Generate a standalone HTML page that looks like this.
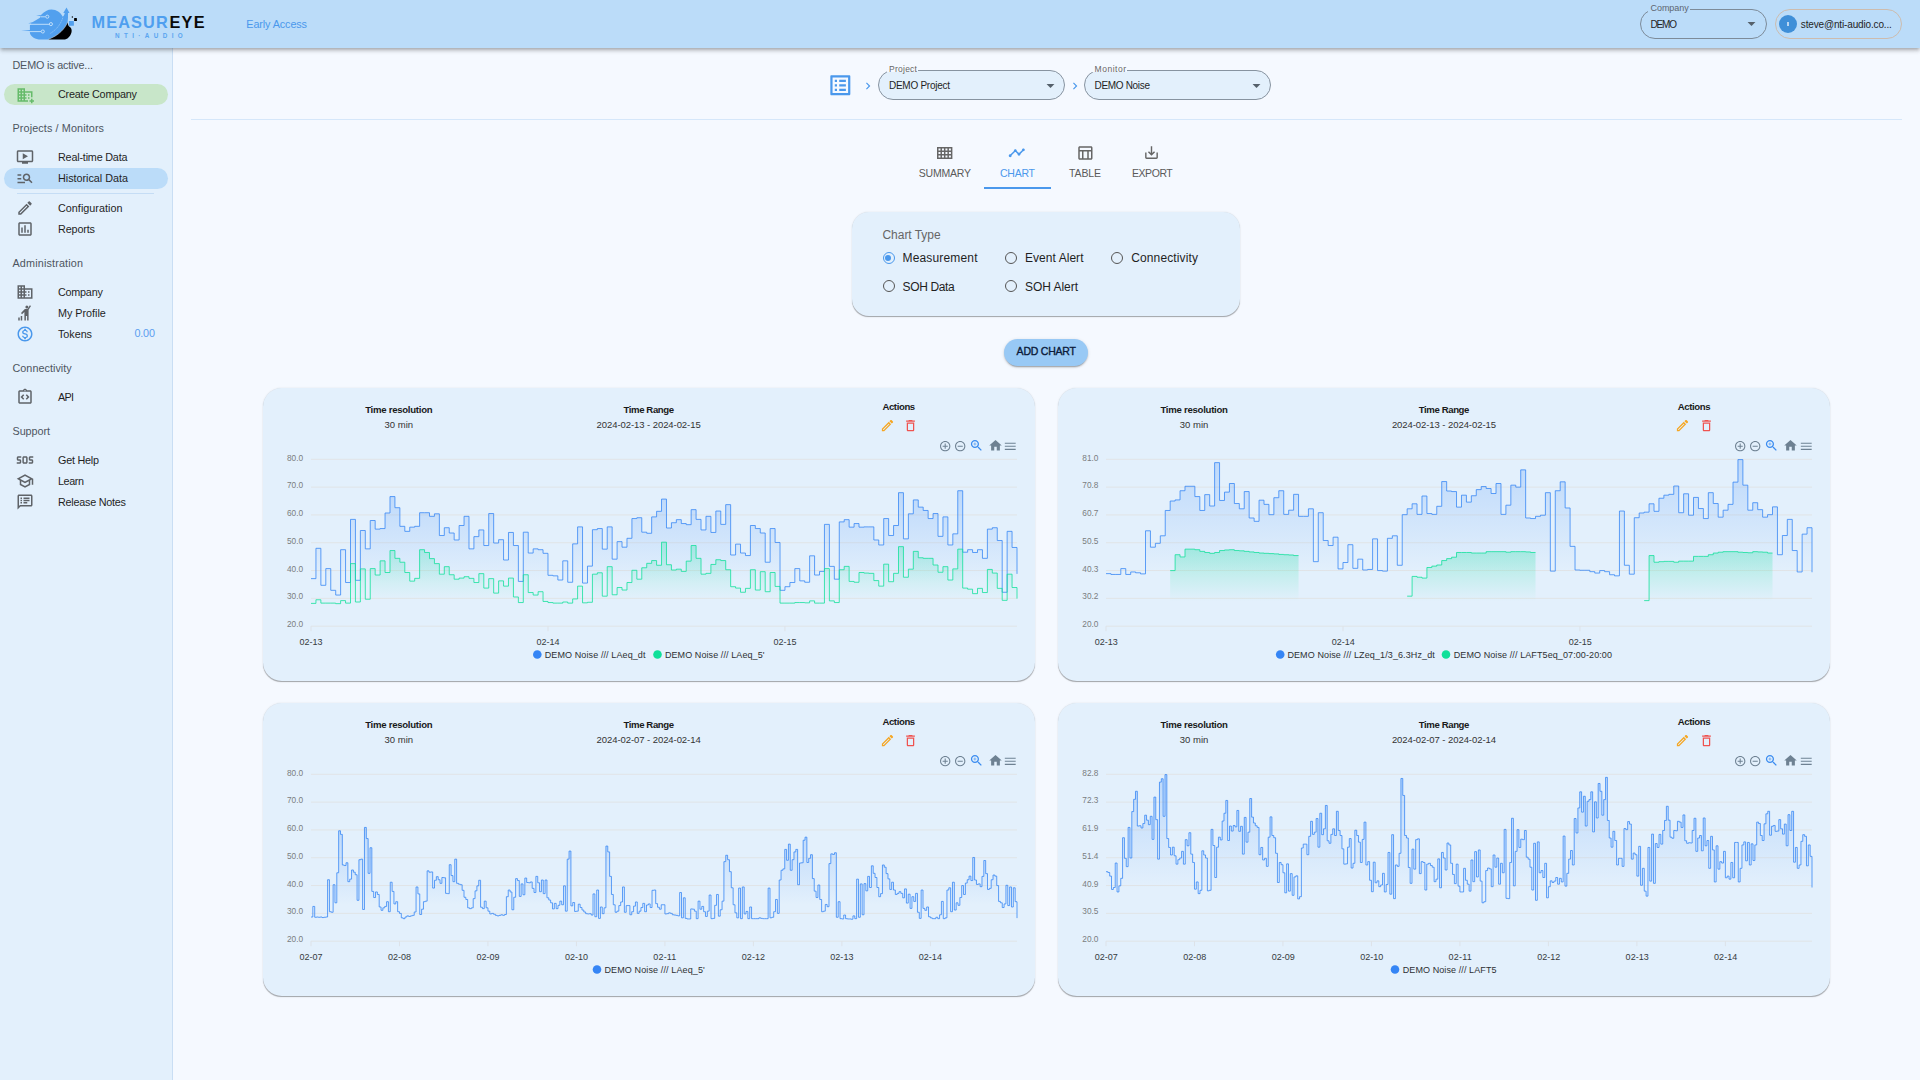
<!DOCTYPE html><html lang="en"><head><meta charset="utf-8"><title>MeasurEye - Historical Data</title>
<style>
html,body{margin:0;padding:0;}
body{width:1920px;height:1080px;overflow:hidden;background:#f5f9ff;font-family:"Liberation Sans", Arial, sans-serif;position:relative;}
*{box-sizing:border-box;}
#hdr{position:absolute;left:0;top:0;width:1920px;height:48px;background:#bbdcf9;box-shadow:0 1.500px 3px -0.750px rgba(0,0,0,.2),0 3px 3.750px 0 rgba(0,0,0,.14),0 0.750px 7.500px 0 rgba(0,0,0,.12);z-index:5;}
#side{position:absolute;left:0;top:48px;width:173px;height:1032px;background:#e3f0fc;border-right:1px solid #c9def4;z-index:2;}
#main{position:absolute;left:0;top:0;width:1920px;height:1080px;z-index:1;}
article.chart,section.grp,div.grp{position:absolute;left:0;top:0;width:0;height:0;}
.pill{position:absolute;left:4px;width:164px;height:21px;border-radius:11px;}
.sel{position:absolute;height:30px;border-radius:15px;border:1px solid #8793a0;}
.card{position:absolute;background:#e3f0fc;border-radius:18.750px;box-shadow:0 1.500px 0.750px -0.750px rgba(0,0,0,.2),0 0.750px 0.750px 0 rgba(0,0,0,.11),0 0.750px 2.250px 0 rgba(0,0,0,.08);}
.radio{position:absolute;width:12px;height:12px;border-radius:50%;border:1.4px solid #555;}
.radio.on{border-color:#4a98ec;}
.radio.on::after{content:"";position:absolute;left:1.6px;top:1.6px;width:6px;height:6px;border-radius:50%;background:#4a98ec;}

</style></head><body>
<header id="hdr">
<svg style="position:absolute;left:16px;top:2px" width="66" height="44" viewBox="16 2 66 44">
<path d="M41 15.100 C44 11.600 48 9.600 51.500 9.600 C56.500 9.600 60.600 12.600 62.800 16.800 C63.800 15.800 64.500 14.500 64.800 12.900 L63.300 12.900 L66.500 7.600 L69.500 12.900 L68 12.900 C68.100 16 68 19.500 67.600 22.100 C65 28.500 59 35.500 48 39.500 L38.700 39.400 C33.500 38.600 30 35.600 29.900 32.500 L29.900 25.200 L32 22.500 L40 17.800 L40.200 15.600 Z" fill="#52a0ee"/>
<path d="M40.500 15.050 L36 15.500 L40.500 16 Z M32.500 22.300 L28.200 23.200 L32.500 23.800 Z M30.200 29.900 L21 30.600 L30.200 31.100 Z" fill="#52a0ee"/>
<path d="M48 39.500 C59 35.500 65.200 28.500 67.600 22.100 C67.800 24 68.200 25.500 68.900 26.300 C71 27.500 72 29.500 71.600 31.800 C71 35.200 68.600 38.700 65 39.500 Z" fill="#000"/>
<path d="M48 39.500 C59 35.500 65.200 28.500 67.600 22.100" stroke="#cfe6fb" stroke-width="0.450" fill="none"/>
<path d="M62.800 17.700 C60.800 24 56.500 29.800 49.800 33.700" stroke="#bbdcf9" stroke-width="0.450" stroke-dasharray="1.600 0.500" fill="none"/>
<g stroke="#c4e0fa" stroke-width="0.950" fill="none"><path d="M40.300 16.800H45.500"/><circle cx="47.300" cy="16.700" r="1.550"/><path d="M29.800 24.300H49.100"/><circle cx="50.900" cy="24.100" r="1.550"/><path d="M29.800 31.600H41"/><circle cx="42.800" cy="31.500" r="1.550"/></g>
<rect x="68.900" y="21" width="5" height="4.700" rx="0.500" fill="#52a0ee"/><rect x="74.100" y="18.100" width="2.800" height="2.900" rx="0.300" fill="#000"/><circle cx="72.400" cy="17.100" r="0.750" fill="#111"/><circle cx="75.200" cy="16.200" r="0.350" fill="#8ec3f5"/>
</svg>
<span style="position:absolute;left:91.60px;top:13px;font-size:16.3px;line-height:18px;height:18px;color:#4f9fef;font-weight:700;white-space:nowrap;letter-spacing:1.107px;margin-right:-1.107px;">MEASUR</span>
<span style="position:absolute;left:169.40px;top:13px;font-size:16.3px;line-height:18px;height:18px;color:#0a0a0a;font-weight:700;white-space:nowrap;letter-spacing:1.303px;margin-right:-1.303px;">EYE</span>
<span style="position:absolute;left:115.00px;top:32px;font-size:6.3px;line-height:7px;height:7px;color:#5aa5f0;font-weight:700;white-space:nowrap;letter-spacing:4.396px;margin-right:-4.396px;">NTI·AUDIO</span>
<span style="position:absolute;left:246.30px;top:18px;font-size:10.8px;line-height:12px;height:12px;color:#4a98ec;font-weight:400;white-space:nowrap;letter-spacing:-0.101px;margin-right:0.101px;">Early Access</span>
<div class="sel" style="left:1640px;top:9px;width:127px;border-color:#7d8b99"></div>
<div style="position:absolute;left:1648px;top:6px;width:41.500px;height:6px;background:#bbdcf9"></div>
<span style="position:absolute;left:1650.50px;top:3px;font-size:9px;line-height:10px;height:10px;color:#5d6670;font-weight:400;white-space:nowrap;letter-spacing:-0.055px;margin-right:0.055px;">Company</span>
<span style="position:absolute;left:1650.50px;top:19px;font-size:10px;line-height:11px;height:11px;color:#1f1f1f;font-weight:400;white-space:nowrap;letter-spacing:-1.167px;margin-right:1.167px;">DEMO</span>
<svg style="position:absolute;left:1741.50px;top:14.10px" width="19" height="19" viewBox="0 0 24 24" fill="#55606b" ><path d="M7 10l5 5 5-5z"/></svg>
<div class="sel" style="left:1775px;top:9px;width:127px;border-color:#cdbcae"></div>
<div style="position:absolute;left:1779px;top:14.800px;width:18px;height:18px;border-radius:50%;background:#3f8fd8"></div>
<div style="position:absolute;left:1787.400px;top:22px;width:1.200px;height:3.600px;background:#b9d6f2"></div>
<span style="position:absolute;left:1800.80px;top:19px;font-size:10px;line-height:11px;height:11px;color:#1f1f1f;font-weight:400;white-space:nowrap;letter-spacing:-0.150px;margin-right:0.150px;">steve@nti-audio.co...</span>
</header>
<aside id="side"></aside>
<nav style="position:absolute;left:0;top:0;z-index:3">
<span style="position:absolute;left:12.50px;top:59px;font-size:10.8px;line-height:12px;height:12px;color:#4d5560;font-weight:400;white-space:nowrap;letter-spacing:-0.182px;margin-right:0.182px;">DEMO is active...</span>
<div class="pill" style="top:84px;background:#c8e6c9"></div>
<svg style="position:absolute;left:15.60px;top:85.90px" width="18" height="18" viewBox="0 0 24 24" fill="#66bb6a" ><path d="M12 7V3H2v18h14v-2h-4v-2h2v-2h-2v-2h2v-2h-2V9h8v6h2V7H12zM6 19H4v-2h2v2zm0-4H4v-2h2v2zm0-4H4V9h2v2zm0-4H4V5h2v2zm4 12H8v-2h2v2zm0-4H8v-2h2v2zm0-4H8V9h2v2zm0-4H8V5h2v2zm14 12v2h-2v2h-2v-2h-2v-2h2v-2h2v2h2zm-6-8h-2v2h2v-2zm0 4h-2v2h2v-2z"/></svg>
<span style="position:absolute;left:58.00px;top:88px;font-size:10.8px;line-height:12px;height:12px;color:#1f1f1f;font-weight:400;white-space:nowrap;letter-spacing:-0.202px;margin-right:0.202px;">Create Company</span>
<span style="position:absolute;left:12.50px;top:122px;font-size:10.8px;line-height:12px;height:12px;color:#4d5560;font-weight:400;white-space:nowrap;letter-spacing:0.116px;margin-right:-0.116px;">Projects / Monitors</span>
<svg style="position:absolute;left:16.00px;top:148.00px" width="18" height="18" viewBox="0 0 24 24" fill="#5f6368" ><path d="M21 3H3c-1.110 0-2 .890-2 2v12c0 1.100.890 2 2 2h5v2h8v-2h5c1.100 0 1.990-.900 1.990-2L23 5c0-1.110-.900-2-2-2zm0 14H3V5h18v12zm-5-6l-7 4V7z"/></svg>
<span style="position:absolute;left:58.00px;top:151px;font-size:10.8px;line-height:12px;height:12px;color:#1f1f1f;font-weight:400;white-space:nowrap;letter-spacing:-0.194px;margin-right:0.194px;">Real-time Data</span>
<div class="pill" style="top:168px;background:#bbdcf9"></div>
<svg style="position:absolute;left:16.00px;top:169.00px" width="18" height="18" viewBox="0 0 24 24" fill="#5f6368" ><path d="M7 9H2V7h5v2zm0 3H2v2h5v-2zm13.590 7l-3.830-3.830c-.800.520-1.740.830-2.760.830-2.760 0-5-2.240-5-5s2.240-5 5-5 5 2.240 5 5c0 1.020-.310 1.960-.830 2.750L22 17.590 20.590 19zM17 11c0-1.650-1.350-3-3-3s-3 1.350-3 3 1.350 3 3 3 3-1.350 3-3zM2 19h10v-2H2v2z"/></svg>
<span style="position:absolute;left:58.00px;top:172px;font-size:10.8px;line-height:12px;height:12px;color:#1f1f1f;font-weight:400;white-space:nowrap;letter-spacing:-0.015px;margin-right:0.015px;">Historical Data</span>
<div style="position:absolute;left:17px;top:193px;width:137px;height:1px;background:#c5ddf5"></div>
<svg style="position:absolute;left:16.00px;top:199.00px" width="18" height="18" viewBox="0 0 24 24" fill="#5f6368" ><path d="M14.06 9.02l.92.92L5.92 19H5v-.92l9.06-9.06M17.66 3c-.25 0-.51.1-.7.29l-1.83 1.83 3.75 3.75 1.83-1.83c.39-.39.39-1.02 0-1.41l-2.34-2.34c-.2-.2-.45-.29-.71-.29zm-3.6 3.19L3 17.25V21h3.75L17.81 9.94l-3.75-3.75z"/></svg>
<span style="position:absolute;left:58.00px;top:202px;font-size:10.8px;line-height:12px;height:12px;color:#1f1f1f;font-weight:400;white-space:nowrap;letter-spacing:0.022px;margin-right:-0.022px;">Configuration</span>
<svg style="position:absolute;left:16.00px;top:220.00px" width="18" height="18" viewBox="0 0 24 24" fill="#5f6368" ><path d="M19 3H5c-1.100 0-2 .900-2 2v14c0 1.100.900 2 2 2h14c1.100 0 2-.900 2-2V5c0-1.100-.900-2-2-2zm0 16H5V5h14v14zM7 10h2v7H7zm4-3h2v10h-2zm4 6h2v4h-2z"/></svg>
<span style="position:absolute;left:58.00px;top:223px;font-size:10.8px;line-height:12px;height:12px;color:#1f1f1f;font-weight:400;white-space:nowrap;letter-spacing:-0.135px;margin-right:0.135px;">Reports</span>
<span style="position:absolute;left:12.50px;top:257px;font-size:10.8px;line-height:12px;height:12px;color:#4d5560;font-weight:400;white-space:nowrap;letter-spacing:0.160px;margin-right:-0.160px;">Administration</span>
<svg style="position:absolute;left:16.00px;top:283.00px" width="18" height="18" viewBox="0 0 24 24" fill="#5f6368" ><path d="M12 7V3H2v18h20V7H12zM6 19H4v-2h2v2zm0-4H4v-2h2v2zm0-4H4V9h2v2zm0-4H4V5h2v2zm4 12H8v-2h2v2zm0-4H8v-2h2v2zm0-4H8V9h2v2zm0-4H8V5h2v2zm10 12h-8v-2h2v-2h-2v-2h2v-2h-2V9h8v10zm-2-8h-2v2h2v-2zm0 4h-2v2h2v-2z"/></svg>
<span style="position:absolute;left:58.00px;top:286px;font-size:10.8px;line-height:12px;height:12px;color:#1f1f1f;font-weight:400;white-space:nowrap;letter-spacing:-0.236px;margin-right:0.236px;">Company</span>
<svg style="position:absolute;left:16.00px;top:304.00px" width="18" height="18" viewBox="0 0 24 24" fill="#5f6368" ><circle cx="14.500" cy="4" r="2"/><path d="M18.500 1.500l1.500 1-3.200 5.300V22h-2v-6h-1.600v6h-2V10.800L8 13.500l-1.300-1.500 4.400-4.600c.500-.500 1.100-.700 1.800-.700h2.400zM3 22v-4h2v4zm3.300 0v-6h2v6z"/></svg>
<span style="position:absolute;left:58.00px;top:307px;font-size:10.8px;line-height:12px;height:12px;color:#1f1f1f;font-weight:400;white-space:nowrap;letter-spacing:-0.022px;margin-right:0.022px;">My Profile</span>
<svg style="position:absolute;left:16.00px;top:325.00px" width="18" height="18" viewBox="0 0 24 24" fill="#4a98ec" ><path d="M12 2C6.480 2 2 6.480 2 12s4.480 10 10 10 10-4.480 10-10S17.520 2 12 2zm0 18c-4.410 0-8-3.590-8-8s3.590-8 8-8 8 3.590 8 8-3.590 8-8 8zm.310-8.860c-1.770-.450-2.340-.940-2.340-1.670 0-.840.790-1.430 2.100-1.430 1.380 0 1.900.660 1.940 1.640h1.710c-.050-1.340-.870-2.570-2.490-2.970V5H10.900v1.690c-1.510.320-2.720 1.300-2.720 2.810 0 1.790 1.490 2.690 3.660 3.210 1.950.460 2.340 1.150 2.340 1.870 0 .530-.390 1.390-2.100 1.390-1.600 0-2.230-.720-2.320-1.640H8.040c.100 1.700 1.360 2.660 2.860 2.970V19h2.340v-1.670c1.520-.290 2.720-1.160 2.730-2.770-.010-2.200-1.900-2.960-3.660-3.420z"/></svg>
<span style="position:absolute;left:58.00px;top:328px;font-size:10.8px;line-height:12px;height:12px;color:#1f1f1f;font-weight:400;white-space:nowrap;letter-spacing:-0.044px;margin-right:0.044px;">Tokens</span>
<span style="position:absolute;left:134.40px;top:327px;font-size:10.8px;line-height:12px;height:12px;color:#5b9df0;font-weight:400;white-space:nowrap;letter-spacing:-0.139px;margin-right:0.139px;">0.00</span>
<span style="position:absolute;left:12.50px;top:362px;font-size:10.8px;line-height:12px;height:12px;color:#4d5560;font-weight:400;white-space:nowrap;letter-spacing:0.035px;margin-right:-0.035px;">Connectivity</span>
<svg style="position:absolute;left:16.00px;top:388.00px" width="18" height="18" viewBox="0 0 24 24" fill="#5f6368" ><path d="M11 14.170L8.830 12 11 9.830 9.590 8.410 6 12l3.590 3.590zM14.410 15.590L18 12l-3.590-3.590L13 9.830 15.170 12 13 14.170z"/><path d="M19 3h-4.180C14.400 1.840 13.300 1 12 1s-2.400.840-2.820 2H5c-.140 0-.270.010-.400.040-.390.080-.740.280-1.010.550-.180.180-.330.400-.430.640-.100.230-.160.490-.160.770v14c0 .270.060.540.160.780s.250.450.430.640c.270.270.620.470 1.010.550.130.020.260.030.400.030h14c1.100 0 2-.900 2-2V5c0-1.100-.900-2-2-2zm-7-.250c.410 0 .750.340.750.750s-.340.750-.750.750-.750-.340-.750-.750.340-.750.750-.750zM19 19H5V5h14v14z"/></svg>
<span style="position:absolute;left:58.00px;top:391px;font-size:10.8px;line-height:12px;height:12px;color:#1f1f1f;font-weight:400;white-space:nowrap;letter-spacing:-0.703px;margin-right:0.703px;">API</span>
<span style="position:absolute;left:12.50px;top:425px;font-size:10.8px;line-height:12px;height:12px;color:#4d5560;font-weight:400;white-space:nowrap;letter-spacing:-0.055px;margin-right:0.055px;">Support</span>
<svg style="position:absolute;left:16.00px;top:451.00px" width="18" height="18" viewBox="0 0 24 24" fill="#5f6368" ><path d="M13.500 7h-3c-1.100 0-2 .900-2 2v6c0 1.100.900 2 2 2h3c1.100 0 2-.900 2-2V9c0-1.100-.900-2-2-2zm0 8h-3V9h3v6zM1 15h4v-2H3c-1.100 0-2-.900-2-2V9c0-1.100.900-2 2-2h4v2H3v2h2c1.100 0 2 .900 2 2v2c0 1.100-.900 2-2 2H1v-2zm16 0h4v-2h-2c-1.100 0-2-.900-2-2V9c0-1.100.900-2 2-2h4v2h-4v2h2c1.100 0 2 .900 2 2v2c0 1.100-.900 2-2 2h-4v-2z"/></svg>
<span style="position:absolute;left:58.00px;top:454px;font-size:10.8px;line-height:12px;height:12px;color:#1f1f1f;font-weight:400;white-space:nowrap;letter-spacing:-0.230px;margin-right:0.230px;">Get Help</span>
<svg style="position:absolute;left:16.00px;top:472.00px" width="18" height="18" viewBox="0 0 24 24" fill="#5f6368" ><path d="M12 3L1 9l4 2.180v6L12 21l7-3.820v-6l2-1.090V17h2V9L12 3zm6.820 6L12 12.720 5.180 9 12 5.280 18.820 9zM17 15.990l-5 2.730-5-2.730v-3.720L12 15l5-2.730v3.720z"/></svg>
<span style="position:absolute;left:58.00px;top:475px;font-size:10.8px;line-height:12px;height:12px;color:#1f1f1f;font-weight:400;white-space:nowrap;letter-spacing:-0.406px;margin-right:0.406px;">Learn</span>
<svg style="position:absolute;left:16.00px;top:493.00px" width="18" height="18" viewBox="0 0 24 24" fill="#5f6368" ><path d="M20 4v12H5.170L4 17.170V4h16m0-2H4c-1.100 0-1.990.900-1.990 2L2 22l4-4h14c1.100 0 2-.900 2-2V4c0-1.100-.900-2-2-2zM6 12h2v2H6zm0-3h2v2H6zm0-3h2v2H6zm4 6h5v2h-5zm0-3h8v2h-8zm0-3h8v2h-8z"/></svg>
<span style="position:absolute;left:58.00px;top:496px;font-size:10.8px;line-height:12px;height:12px;color:#1f1f1f;font-weight:400;white-space:nowrap;letter-spacing:-0.236px;margin-right:0.236px;">Release Notes</span>
</nav>
<main id="main">
<div class="grp">
<svg style="position:absolute;left:826.67px;top:71.67px" width="26.67" height="26.67" viewBox="0 0 24 24" fill="#4a98ec" ><path d="M19 5v14H5V5h14m1.100-2H3.900c-.500 0-.900.400-.900.900v16.200c0 .400.400.900.900.900h16.200c.400 0 .900-.500.900-.900V3.900c0-.500-.500-.900-.900-.900zM11 7h6v2h-6V7zm0 4h6v2h-6v-2zm0 4h6v2h-6zM7 7h2v2H7zm0 4h2v2H7zm0 4h2v2H7z"/></svg>
<svg style="position:absolute;left:861.00px;top:78.50px" width="14" height="14" viewBox="0 0 24 24" fill="#4a98ec" ><path d="M10 6L8.590 7.410 13.170 12l-4.580 4.590L10 18l6-6z"/></svg>
<div class="sel" style="left:878px;top:70px;width:187px;background:#e3f0fc"></div>
<div style="position:absolute;left:886.500px;top:68px;width:31.500px;height:4px;background:#f5f9ff"></div>
<span style="position:absolute;left:889.00px;top:64px;font-size:8.5px;line-height:10px;height:10px;color:#666;font-weight:400;white-space:nowrap;letter-spacing:0.255px;margin-right:-0.255px;">Project</span>
<span style="position:absolute;left:889.00px;top:80px;font-size:10px;line-height:11px;height:11px;color:#1f1f1f;font-weight:400;white-space:nowrap;letter-spacing:-0.264px;margin-right:0.264px;">DEMO Project</span>
<svg style="position:absolute;left:1040.50px;top:75.60px" width="19" height="19" viewBox="0 0 24 24" fill="#55606b" ><path d="M7 10l5 5 5-5z"/></svg>
<svg style="position:absolute;left:1067.50px;top:78.50px" width="14" height="14" viewBox="0 0 24 24" fill="#4a98ec" ><path d="M10 6L8.590 7.410 13.170 12l-4.580 4.590L10 18l6-6z"/></svg>
<div class="sel" style="left:1084px;top:70px;width:187px;background:#e3f0fc"></div>
<div style="position:absolute;left:1092px;top:68px;width:35px;height:4px;background:#f5f9ff"></div>
<span style="position:absolute;left:1094.60px;top:64px;font-size:8.5px;line-height:10px;height:10px;color:#666;font-weight:400;white-space:nowrap;letter-spacing:0.509px;margin-right:-0.509px;">Monitor</span>
<span style="position:absolute;left:1094.60px;top:80px;font-size:10px;line-height:11px;height:11px;color:#1f1f1f;font-weight:400;white-space:nowrap;letter-spacing:-0.329px;margin-right:0.329px;">DEMO Noise</span>
<svg style="position:absolute;left:1246.50px;top:75.60px" width="19" height="19" viewBox="0 0 24 24" fill="#55606b" ><path d="M7 10l5 5 5-5z"/></svg>
<div style="position:absolute;left:191px;top:119px;width:1711px;height:1px;background:#d5e7fa"></div>
</div>
<div class="grp">
<svg style="position:absolute;left:937.400px;top:147px" width="15.400" height="12" viewBox="0 0 15.400 12"><rect x="0" y="0" width="15.400" height="12" fill="#666"/><rect x="1.500" y="1.500" width="1.975" height="2" fill="#f5f9ff"/><rect x="4.975" y="1.500" width="1.975" height="2" fill="#f5f9ff"/><rect x="8.450" y="1.500" width="1.975" height="2" fill="#f5f9ff"/><rect x="11.925" y="1.500" width="1.975" height="2" fill="#f5f9ff"/><rect x="1.500" y="5.000" width="1.975" height="2" fill="#f5f9ff"/><rect x="4.975" y="5.000" width="1.975" height="2" fill="#f5f9ff"/><rect x="8.450" y="5.000" width="1.975" height="2" fill="#f5f9ff"/><rect x="11.925" y="5.000" width="1.975" height="2" fill="#f5f9ff"/><rect x="1.500" y="8.500" width="1.975" height="2" fill="#f5f9ff"/><rect x="4.975" y="8.500" width="1.975" height="2" fill="#f5f9ff"/><rect x="8.450" y="8.500" width="1.975" height="2" fill="#f5f9ff"/><rect x="11.925" y="8.500" width="1.975" height="2" fill="#f5f9ff"/></svg>
<span style="position:absolute;left:918.75px;top:167px;font-size:10.5px;line-height:12px;height:12px;color:#5a5a5a;font-weight:400;white-space:nowrap;letter-spacing:-0.206px;margin-right:0.206px;">SUMMARY</span>
<svg style="position:absolute;left:1008.00px;top:144.00px" width="17.6" height="17.6" viewBox="0 0 24 24" fill="#4a98ec" ><path d="M23 8c0 1.100-.900 2-2 2-.180 0-.350-.020-.510-.070l-3.560 3.550c.050.160.070.340.070.520 0 1.100-.900 2-2 2s-2-.900-2-2c0-.180.020-.360.070-.520l-2.550-2.550c-.160.050-.340.070-.520.070s-.360-.020-.520-.070l-4.550 4.560c.050.160.070.330.070.510 0 1.100-.900 2-2 2s-2-.900-2-2 .900-2 2-2c.180 0 .350.020.510.070l4.560-4.550C8.020 9.360 8 9.180 8 9c0-1.100.900-2 2-2s2 .900 2 2c0 .180-.020.360-.070.520l2.550 2.550c.160-.050.340-.070.520-.070s.360.020.520.070l3.550-3.560C19.020 8.350 19 8.180 19 8c0-1.100.900-2 2-2s2 .900 2 2z"/></svg>
<span style="position:absolute;left:1000.00px;top:167px;font-size:10.5px;line-height:12px;height:12px;color:#4a98ec;font-weight:400;white-space:nowrap;letter-spacing:-0.246px;margin-right:0.246px;">CHART</span>
<svg style="position:absolute;left:1076.00px;top:144.00px" width="18" height="18" viewBox="0 0 24 24" fill="#666" ><path d="M20 3H5c-1.100 0-2 .900-2 2v14c0 1.100.900 2 2 2h15c1.100 0 2-.900 2-2V5c0-1.100-.900-2-2-2zm0 2v3H5V5h15zm-5 14h-5v-9h5v9zM5 10h3v9H5v-9zm12 9v-9h3v9h-3z"/></svg>
<span style="position:absolute;left:1069.00px;top:167px;font-size:10.5px;line-height:12px;height:12px;color:#5a5a5a;font-weight:400;white-space:nowrap;letter-spacing:-0.121px;margin-right:0.121px;">TABLE</span>
<svg style="position:absolute;left:1143.40px;top:144.30px" width="17" height="17" viewBox="0 0 24 24" fill="#666" ><path d="M19 12v7H5v-7H3v7c0 1.100.900 2 2 2h14c1.100 0 2-.900 2-2v-7h-2zm-6 .670l2.590-2.580L17 11.500l-5 5-5-5 1.410-1.410L11 12.670V3h2z"/></svg>
<span style="position:absolute;left:1132.00px;top:167px;font-size:10.5px;line-height:12px;height:12px;color:#5a5a5a;font-weight:400;white-space:nowrap;letter-spacing:-0.447px;margin-right:0.447px;">EXPORT</span>
<div style="position:absolute;left:984px;top:187.400px;width:67px;height:1.600px;background:#4a98ec"></div>
</div>
<section class="grp">
<div class="card" style="left:851.500px;top:212px;width:388.500px;height:104px;border-radius:17px"></div>
<span style="position:absolute;left:882.50px;top:228px;font-size:12px;line-height:14px;height:14px;color:#666;font-weight:400;white-space:nowrap;letter-spacing:-0.043px;margin-right:0.043px;">Chart Type</span>
<div class="radio on" style="left:882.5px;top:252.2px"></div>
<span style="position:absolute;left:902.50px;top:251px;font-size:12px;line-height:14px;height:14px;color:#1f1f1f;font-weight:400;white-space:nowrap;letter-spacing:0.163px;margin-right:-0.163px;">Measurement</span>
<div class="radio" style="left:1004.6px;top:252.2px"></div>
<span style="position:absolute;left:1025.00px;top:251px;font-size:12px;line-height:14px;height:14px;color:#1f1f1f;font-weight:400;white-space:nowrap;letter-spacing:0.047px;margin-right:-0.047px;">Event Alert</span>
<div class="radio" style="left:1110.5px;top:252.2px"></div>
<span style="position:absolute;left:1131.25px;top:251px;font-size:12px;line-height:14px;height:14px;color:#1f1f1f;font-weight:400;white-space:nowrap;letter-spacing:0.116px;margin-right:-0.116px;">Connectivity</span>
<div class="radio" style="left:882.5px;top:280.2px"></div>
<span style="position:absolute;left:902.50px;top:280px;font-size:12px;line-height:14px;height:14px;color:#1f1f1f;font-weight:400;white-space:nowrap;letter-spacing:-0.348px;margin-right:0.348px;">SOH Data</span>
<div class="radio" style="left:1004.6px;top:280.2px"></div>
<span style="position:absolute;left:1025.00px;top:280px;font-size:12px;line-height:14px;height:14px;color:#1f1f1f;font-weight:400;white-space:nowrap;letter-spacing:-0.045px;margin-right:0.045px;">SOH Alert</span>
</section>
<div style="position:absolute;left:1004px;top:339px;width:84px;height:27px;border-radius:13.500px;background:#98c9f5;box-shadow:0 2.250px 0.750px -1.500px rgba(0,0,0,.2),0 1.500px 1.500px 0 rgba(0,0,0,.14),0 0.750px 3.750px 0 rgba(0,0,0,.12)"></div>
<span style="position:absolute;left:1016.60px;top:345px;font-size:10.5px;line-height:12px;height:12px;color:#0b1a3a;font-weight:400;white-space:nowrap;letter-spacing:-0.220px;margin-right:0.220px;-webkit-text-stroke:0.350px #0b1a3a;">ADD CHART</span>
<article class="chart">
<div class="card" style="left:262.7px;top:388.3px;width:772.600px;height:292.700px"></div>
<span style="position:absolute;left:398.75px;transform:translateX(-50%);top:404px;font-size:9.6px;line-height:11px;height:11px;color:#1a1a1a;font-weight:700;white-space:nowrap;letter-spacing:-0.269px;margin-right:0.269px;">Time resolution</span>
<span style="position:absolute;left:398.75px;transform:translateX(-50%);top:419px;font-size:9.5px;line-height:11px;height:11px;color:#333;font-weight:400;white-space:nowrap;letter-spacing:0.017px;margin-right:-0.017px;">30 min</span>
<span style="position:absolute;left:648.60px;transform:translateX(-50%);top:404px;font-size:9.6px;line-height:11px;height:11px;color:#1a1a1a;font-weight:700;white-space:nowrap;letter-spacing:-0.402px;margin-right:0.402px;">Time Range</span>
<span style="position:absolute;left:648.60px;transform:translateX(-50%);top:419px;font-size:9.5px;line-height:11px;height:11px;color:#333;font-weight:400;white-space:nowrap;letter-spacing:-0.070px;margin-right:0.070px;">2024-02-13 - 2024-02-15</span>
<span style="position:absolute;left:898.60px;transform:translateX(-50%);top:401px;font-size:9.6px;line-height:11px;height:11px;color:#1a1a1a;font-weight:700;white-space:nowrap;letter-spacing:-0.398px;margin-right:0.398px;">Actions</span>
<svg style="position:absolute;left:879.60px;top:418.00px" width="15" height="15" viewBox="0 0 24 24" fill="#f5a623" ><path d="M14.06 9.02l.92.92L5.92 19H5v-.92l9.06-9.06M17.66 3c-.25 0-.51.1-.7.29l-1.83 1.83 3.75 3.75 1.83-1.83c.39-.39.39-1.02 0-1.41l-2.34-2.34c-.2-.2-.45-.29-.71-.29zm-3.6 3.19L3 17.25V21h3.75L17.81 9.94l-3.75-3.75z"/></svg>
<svg style="position:absolute;left:903.20px;top:418.00px" width="15" height="15" viewBox="0 0 24 24" fill="#ef5350" ><path d="M16 9v10H8V9h8m-1.500-6h-5l-1 1H5v2h14V4h-3.500l-1-1zM18 7H6v12c0 1.100.900 2 2 2h8c1.100 0 2-.900 2-2V7z"/></svg>
<svg style="position:absolute;left:938.70px;top:439.70px" width="12.4" height="12.4" viewBox="0 0 24 24" fill="#6e8192" ><path d="M13 7h-2v4H7v2h4v4h2v-4h4v-2h-4V7zm-1-5C6.480 2 2 6.480 2 12s4.480 10 10 10 10-4.480 10-10S17.520 2 12 2zm0 18c-4.410 0-8-3.590-8-8s3.590-8 8-8 8 3.590 8 8-3.590 8-8 8z"/></svg>
<svg style="position:absolute;left:953.50px;top:439.70px" width="12.4" height="12.4" viewBox="0 0 24 24" fill="#6e8192" ><path d="M7 11v2h10v-2H7zm5-9C6.480 2 2 6.480 2 12s4.480 10 10 10 10-4.480 10-10S17.520 2 12 2zm0 18c-4.410 0-8-3.590-8-8s3.590-8 8-8 8 3.590 8 8-3.590 8-8 8z"/></svg>
<svg style="position:absolute;left:968.80px;top:438.20px" width="15" height="15" viewBox="0 0 24 24" fill="#3b8cf0" ><path d="M15.500 14h-.790l-.280-.270C15.410 12.590 16 11.110 16 9.500 16 5.910 13.090 3 9.500 3S3 5.910 3 9.500 5.910 16 9.500 16c1.610 0 3.090-.590 4.230-1.570l.270.280v.790l5 4.990L20.490 19l-4.990-5zm-6 0C7.010 14 5 11.990 5 9.500S7.010 5 9.500 5 14 7.010 14 9.500 11.990 14 9.500 14z"/><path d="M12 10h-2v2H9v-2H7V9h2V7h1v2h2v1z"/></svg>
<svg style="position:absolute;left:988.00px;top:438.00px" width="15" height="15" viewBox="0 0 24 24" fill="#6e8192" ><path d="M10 20v-6h4v6h5v-8h3L12 3 2 12h3v8z"/></svg>
<svg style="position:absolute;left:1003.30px;top:438.80px" width="14.5" height="14.5" viewBox="0 0 24 24" fill="#6e8192" ><path d="M3 18h18v-2H3v2zm0-5h18v-2H3v2zm0-7v2h18V6H3z"/></svg>
<svg style="position:absolute;left:262px;top:388px" width="773.500" height="293" viewBox="0 0 773.500 293" font-family='"Liberation Sans", Arial, sans-serif'><defs><linearGradient id="g1" gradientUnits="userSpaceOnUse" x1="0" y1="102.7" x2="0" y2="238.2"><stop offset="0" stop-color="#3585f5" stop-opacity="0.22"/><stop offset="0.68" stop-color="#3585f5" stop-opacity="0"/><stop offset="1" stop-color="#3585f5" stop-opacity="0"/></linearGradient><linearGradient id="g2" gradientUnits="userSpaceOnUse" x1="0" y1="154.2" x2="0" y2="238.2"><stop offset="0" stop-color="#0fe09a" stop-opacity="0.26"/><stop offset="0.68" stop-color="#0fe09a" stop-opacity="0"/><stop offset="1" stop-color="#0fe09a" stop-opacity="0"/></linearGradient></defs><path d="M49.0 71.30H755.0" stroke="#e1e4e6" stroke-width="1" fill="none"/><path d="M49.0 99.12H755.0" stroke="#e1e4e6" stroke-width="1" fill="none"/><path d="M49.0 126.93H755.0" stroke="#e1e4e6" stroke-width="1" fill="none"/><path d="M49.0 154.75H755.0" stroke="#e1e4e6" stroke-width="1" fill="none"/><path d="M49.0 182.57H755.0" stroke="#e1e4e6" stroke-width="1" fill="none"/><path d="M49.0 210.38H755.0" stroke="#e1e4e6" stroke-width="1" fill="none"/><path d="M49.0 238.20H755.0" stroke="#e1e4e6" stroke-width="1" fill="none"/><path d="M49.00 238.20v5" stroke="#dde2e8" stroke-width="1" fill="none"/><path d="M285.98 238.20v5" stroke="#dde2e8" stroke-width="1" fill="none"/><path d="M522.96 238.20v5" stroke="#dde2e8" stroke-width="1" fill="none"/><path d="M49.00 190.63H53.94V160.31H58.87V197.31H63.81V180.62H68.75V202.32H73.69V207.05H78.62V161.70H83.56V194.53H88.50V131.38H93.43V192.30H98.37V142.51H103.31V160.87H108.24V132.50H113.18V141.12H118.12V140.56H123.06V124.99H127.99V108.57H132.93V119.70H137.87V138.34H142.80V143.35H147.74V139.17H152.68V138.34H157.62V124.71H162.55V124.71H167.49V128.32H172.43V125.82H177.36V147.52H182.30V139.73H187.24V145.01H192.17V151.97H197.11V137.50H202.05V128.32H206.99V160.87H211.92V148.63H216.86V141.95H221.80V157.53H226.73V125.54H231.67V155.03H236.61V151.69H241.55V172.00H246.48V144.46H251.42V157.53H256.36V193.42H261.29V144.18H266.23V165.04H271.17V160.87H276.10V161.70H281.04V165.32H285.98V187.30H290.92V187.85H295.85V192.02H300.79V172.83H305.73V194.25H310.66V155.86H315.60V138.89H320.54V195.08H325.48V178.12H330.41V141.68H335.35V140.56H340.29V161.15H345.22V138.89H350.16V171.16H355.10V153.64H360.03V159.20H364.97V150.30H369.91V130.55H374.85V129.71H379.78V144.18H384.72V145.29H389.66V128.88H394.59V123.32H399.53V111.08H404.47V140.01H409.41V134.72H414.34V131.66H419.28V135.56H424.22V136.67H429.15V121.65H434.09V131.38H439.03V141.95H443.97V128.32H448.90V144.46H453.84V123.04H458.78V136.39H463.71V116.64H468.65V166.99H473.59V156.14H478.52V165.04H483.46V167.55H488.40V137.50H493.34V140.56H498.27V145.01H503.21V174.22H508.15V140.56H513.08V154.47H518.02V202.32H522.96V198.70H527.90V194.53H532.83V180.62H537.77V192.86H542.71V194.25H547.64V167.82H552.58V187.02H557.52V183.40H562.45V136.39H567.39V178.39H572.33V191.19H577.27V133.89H582.20V131.66H587.14V139.17H592.08V135.56H597.01V139.17H601.95V138.89H606.89V138.89H611.83V151.97H616.76V156.98H621.70V130.55H626.64V147.52H631.57V137.50H636.51V104.68H641.45V150.86H646.38V125.82H651.32V111.91H656.26V119.14H661.20V122.48H666.13V130.55H671.07V125.54H676.01V148.35H680.94V128.88H685.88V156.98H690.82V145.85H695.76V102.73H700.69V164.21H705.63V161.70H710.57V164.49H715.50V161.70H720.44V170.33H725.38V141.12H730.31V139.73H735.25V152.52H740.19V204.26H745.13V143.35H750.06V159.48H755.00V185.90V238.20H49.00Z" fill="url(#g1)" stroke="none"/><path d="M49.00 190.63H53.94V160.31H58.87V197.31H63.81V180.62H68.75V202.32H73.69V207.05H78.62V161.70H83.56V194.53H88.50V131.38H93.43V192.30H98.37V142.51H103.31V160.87H108.24V132.50H113.18V141.12H118.12V140.56H123.06V124.99H127.99V108.57H132.93V119.70H137.87V138.34H142.80V143.35H147.74V139.17H152.68V138.34H157.62V124.71H162.55V124.71H167.49V128.32H172.43V125.82H177.36V147.52H182.30V139.73H187.24V145.01H192.17V151.97H197.11V137.50H202.05V128.32H206.99V160.87H211.92V148.63H216.86V141.95H221.80V157.53H226.73V125.54H231.67V155.03H236.61V151.69H241.55V172.00H246.48V144.46H251.42V157.53H256.36V193.42H261.29V144.18H266.23V165.04H271.17V160.87H276.10V161.70H281.04V165.32H285.98V187.30H290.92V187.85H295.85V192.02H300.79V172.83H305.73V194.25H310.66V155.86H315.60V138.89H320.54V195.08H325.48V178.12H330.41V141.68H335.35V140.56H340.29V161.15H345.22V138.89H350.16V171.16H355.10V153.64H360.03V159.20H364.97V150.30H369.91V130.55H374.85V129.71H379.78V144.18H384.72V145.29H389.66V128.88H394.59V123.32H399.53V111.08H404.47V140.01H409.41V134.72H414.34V131.66H419.28V135.56H424.22V136.67H429.15V121.65H434.09V131.38H439.03V141.95H443.97V128.32H448.90V144.46H453.84V123.04H458.78V136.39H463.71V116.64H468.65V166.99H473.59V156.14H478.52V165.04H483.46V167.55H488.40V137.50H493.34V140.56H498.27V145.01H503.21V174.22H508.15V140.56H513.08V154.47H518.02V202.32H522.96V198.70H527.90V194.53H532.83V180.62H537.77V192.86H542.71V194.25H547.64V167.82H552.58V187.02H557.52V183.40H562.45V136.39H567.39V178.39H572.33V191.19H577.27V133.89H582.20V131.66H587.14V139.17H592.08V135.56H597.01V139.17H601.95V138.89H606.89V138.89H611.83V151.97H616.76V156.98H621.70V130.55H626.64V147.52H631.57V137.50H636.51V104.68H641.45V150.86H646.38V125.82H651.32V111.91H656.26V119.14H661.20V122.48H666.13V130.55H671.07V125.54H676.01V148.35H680.94V128.88H685.88V156.98H690.82V145.85H695.76V102.73H700.69V164.21H705.63V161.70H710.57V164.49H715.50V161.70H720.44V170.33H725.38V141.12H730.31V139.73H735.25V152.52H740.19V204.26H745.13V143.35H750.06V159.48H755.00V185.90" fill="none" stroke="#3585f5" stroke-width="1" stroke-opacity="0.78" stroke-linejoin="miter"/><path d="M49.00 215.39H53.94V211.77H58.87V215.11H63.81V215.11H68.75V215.11H73.69V215.67H78.62V212.61H83.56V215.11H88.50V175.61H93.43V214.00H98.37V180.90H103.31V211.22H108.24V180.62H113.18V187.02H118.12V172.83H123.06V184.51H127.99V162.54H132.93V170.33H137.87V174.22H142.80V184.51H147.74V193.14H152.68V190.36H157.62V161.70H162.55V164.49H167.49V170.61H172.43V175.61H177.36V186.18H182.30V178.67H187.24V186.74H192.17V191.19H197.11V190.08H202.05V188.69H206.99V190.36H211.92V194.53H216.86V185.63H221.80V200.09H226.73V190.63H231.67V205.10H236.61V192.86H241.55V198.14H246.48V190.08H251.42V208.99H256.36V214.56H261.29V186.74H266.23V204.54H271.17V207.05H276.10V203.71H281.04V213.44H285.98V214.56H290.92V215.11H295.85V215.11H300.79V214.00H305.73V215.11H310.66V210.94H315.60V198.14H320.54V214.83H325.48V214.28H330.41V186.18H335.35V184.79H340.29V208.16H345.22V178.67H350.16V206.77H355.10V199.53H360.03V202.04H364.97V194.53H369.91V182.29H374.85V191.19H379.78V179.78H384.72V175.33H389.66V172.55H394.59V177.28H399.53V154.19H404.47V176.73H409.41V182.01H414.34V181.18H419.28V183.40H424.22V173.11H429.15V157.53H434.09V170.33H439.03V186.18H443.97V185.35H448.90V176.45H453.84V171.72H458.78V172.55H463.71V181.73H468.65V198.70H473.59V200.09H478.52V204.26H483.46V200.37H488.40V181.73H493.34V202.04H498.27V183.68H503.21V203.71H508.15V184.51H513.08V198.42H518.02V215.11H522.96V215.11H527.90V215.11H532.83V214.56H537.77V214.56H542.71V214.83H547.64V212.89H552.58V215.11H557.52V215.11H562.45V180.62H567.39V212.89H572.33V214.56H577.27V181.73H582.20V178.39H587.14V193.42H592.08V194.25H597.01V184.51H601.95V185.07H606.89V185.35H611.83V192.58H616.76V198.14H621.70V176.17H626.64V193.69H631.57V185.35H636.51V158.64H641.45V189.24H646.38V181.18H651.32V163.37H656.26V169.77H661.20V170.33H666.13V170.33H671.07V177.00H676.01V184.24H680.94V178.67H685.88V192.02H690.82V180.90H695.76V161.15H700.69V200.09H705.63V201.20H710.57V205.65H715.50V200.37H720.44V204.54H725.38V181.45H730.31V185.07H735.25V200.37H740.19V212.33H745.13V186.18H750.06V199.53H755.00V210.66V238.20H49.00Z" fill="url(#g2)" stroke="none"/><path d="M49.00 215.39H53.94V211.77H58.87V215.11H63.81V215.11H68.75V215.11H73.69V215.67H78.62V212.61H83.56V215.11H88.50V175.61H93.43V214.00H98.37V180.90H103.31V211.22H108.24V180.62H113.18V187.02H118.12V172.83H123.06V184.51H127.99V162.54H132.93V170.33H137.87V174.22H142.80V184.51H147.74V193.14H152.68V190.36H157.62V161.70H162.55V164.49H167.49V170.61H172.43V175.61H177.36V186.18H182.30V178.67H187.24V186.74H192.17V191.19H197.11V190.08H202.05V188.69H206.99V190.36H211.92V194.53H216.86V185.63H221.80V200.09H226.73V190.63H231.67V205.10H236.61V192.86H241.55V198.14H246.48V190.08H251.42V208.99H256.36V214.56H261.29V186.74H266.23V204.54H271.17V207.05H276.10V203.71H281.04V213.44H285.98V214.56H290.92V215.11H295.85V215.11H300.79V214.00H305.73V215.11H310.66V210.94H315.60V198.14H320.54V214.83H325.48V214.28H330.41V186.18H335.35V184.79H340.29V208.16H345.22V178.67H350.16V206.77H355.10V199.53H360.03V202.04H364.97V194.53H369.91V182.29H374.85V191.19H379.78V179.78H384.72V175.33H389.66V172.55H394.59V177.28H399.53V154.19H404.47V176.73H409.41V182.01H414.34V181.18H419.28V183.40H424.22V173.11H429.15V157.53H434.09V170.33H439.03V186.18H443.97V185.35H448.90V176.45H453.84V171.72H458.78V172.55H463.71V181.73H468.65V198.70H473.59V200.09H478.52V204.26H483.46V200.37H488.40V181.73H493.34V202.04H498.27V183.68H503.21V203.71H508.15V184.51H513.08V198.42H518.02V215.11H522.96V215.11H527.90V215.11H532.83V214.56H537.77V214.56H542.71V214.83H547.64V212.89H552.58V215.11H557.52V215.11H562.45V180.62H567.39V212.89H572.33V214.56H577.27V181.73H582.20V178.39H587.14V193.42H592.08V194.25H597.01V184.51H601.95V185.07H606.89V185.35H611.83V192.58H616.76V198.14H621.70V176.17H626.64V193.69H631.57V185.35H636.51V158.64H641.45V189.24H646.38V181.18H651.32V163.37H656.26V169.77H661.20V170.33H666.13V170.33H671.07V177.00H676.01V184.24H680.94V178.67H685.88V192.02H690.82V180.90H695.76V161.15H700.69V200.09H705.63V201.20H710.57V205.65H715.50V200.37H720.44V204.54H725.38V181.45H730.31V185.07H735.25V200.37H740.19V212.33H745.13V186.18H750.06V199.53H755.00V210.66" fill="none" stroke="#0fe09a" stroke-width="1" stroke-opacity="0.78" stroke-linejoin="miter"/><circle cx="275.3" cy="266.5" r="4.300" fill="#3585f5"/><circle cx="395.5" cy="266.5" r="4.300" fill="#0fe09a"/></svg>
<span style="position:absolute;left:303.00px;transform:translateX(-100%);top:453px;font-size:8.3px;line-height:10px;height:10px;color:#7a7d80;font-weight:400;white-space:nowrap;letter-spacing:-0.052px;margin-right:0.052px;">80.0</span>
<span style="position:absolute;left:303.00px;transform:translateX(-100%);top:480px;font-size:8.3px;line-height:10px;height:10px;color:#7a7d80;font-weight:400;white-space:nowrap;letter-spacing:-0.052px;margin-right:0.052px;">70.0</span>
<span style="position:absolute;left:303.00px;transform:translateX(-100%);top:508px;font-size:8.3px;line-height:10px;height:10px;color:#7a7d80;font-weight:400;white-space:nowrap;letter-spacing:-0.052px;margin-right:0.052px;">60.0</span>
<span style="position:absolute;left:303.00px;transform:translateX(-100%);top:536px;font-size:8.3px;line-height:10px;height:10px;color:#7a7d80;font-weight:400;white-space:nowrap;letter-spacing:-0.052px;margin-right:0.052px;">50.0</span>
<span style="position:absolute;left:303.00px;transform:translateX(-100%);top:564px;font-size:8.3px;line-height:10px;height:10px;color:#7a7d80;font-weight:400;white-space:nowrap;letter-spacing:-0.052px;margin-right:0.052px;">40.0</span>
<span style="position:absolute;left:303.00px;transform:translateX(-100%);top:591px;font-size:8.3px;line-height:10px;height:10px;color:#7a7d80;font-weight:400;white-space:nowrap;letter-spacing:-0.052px;margin-right:0.052px;">30.0</span>
<span style="position:absolute;left:303.00px;transform:translateX(-100%);top:619px;font-size:8.3px;line-height:10px;height:10px;color:#7a7d80;font-weight:400;white-space:nowrap;letter-spacing:-0.052px;margin-right:0.052px;">20.0</span>
<span style="position:absolute;left:311.00px;transform:translateX(-50%);top:637px;font-size:9px;line-height:10px;height:10px;color:#363b3e;font-weight:400;white-space:nowrap;letter-spacing:0.017px;margin-right:-0.017px;">02-13</span>
<span style="position:absolute;left:547.98px;transform:translateX(-50%);top:637px;font-size:9px;line-height:10px;height:10px;color:#363b3e;font-weight:400;white-space:nowrap;letter-spacing:0.017px;margin-right:-0.017px;">02-14</span>
<span style="position:absolute;left:784.96px;transform:translateX(-50%);top:637px;font-size:9px;line-height:10px;height:10px;color:#363b3e;font-weight:400;white-space:nowrap;letter-spacing:0.017px;margin-right:-0.017px;">02-15</span>
<span style="position:absolute;left:544.70px;top:650px;font-size:9px;line-height:10px;height:10px;color:#2e3133;font-weight:400;white-space:nowrap;letter-spacing:0.107px;margin-right:-0.107px;">DEMO Noise /// LAeq_dt</span>
<span style="position:absolute;left:664.90px;top:650px;font-size:9px;line-height:10px;height:10px;color:#2e3133;font-weight:400;white-space:nowrap;letter-spacing:0.087px;margin-right:-0.087px;">DEMO Noise /// LAeq_5'</span>
</article>
<article class="chart">
<div class="card" style="left:1057.7px;top:388.3px;width:772.600px;height:292.700px"></div>
<span style="position:absolute;left:1194.05px;transform:translateX(-50%);top:404px;font-size:9.6px;line-height:11px;height:11px;color:#1a1a1a;font-weight:700;white-space:nowrap;letter-spacing:-0.269px;margin-right:0.269px;">Time resolution</span>
<span style="position:absolute;left:1194.05px;transform:translateX(-50%);top:419px;font-size:9.5px;line-height:11px;height:11px;color:#333;font-weight:400;white-space:nowrap;letter-spacing:0.017px;margin-right:-0.017px;">30 min</span>
<span style="position:absolute;left:1443.90px;transform:translateX(-50%);top:404px;font-size:9.6px;line-height:11px;height:11px;color:#1a1a1a;font-weight:700;white-space:nowrap;letter-spacing:-0.402px;margin-right:0.402px;">Time Range</span>
<span style="position:absolute;left:1443.90px;transform:translateX(-50%);top:419px;font-size:9.5px;line-height:11px;height:11px;color:#333;font-weight:400;white-space:nowrap;letter-spacing:-0.070px;margin-right:0.070px;">2024-02-13 - 2024-02-15</span>
<span style="position:absolute;left:1693.90px;transform:translateX(-50%);top:401px;font-size:9.6px;line-height:11px;height:11px;color:#1a1a1a;font-weight:700;white-space:nowrap;letter-spacing:-0.398px;margin-right:0.398px;">Actions</span>
<svg style="position:absolute;left:1674.90px;top:418.00px" width="15" height="15" viewBox="0 0 24 24" fill="#f5a623" ><path d="M14.06 9.02l.92.92L5.92 19H5v-.92l9.06-9.06M17.66 3c-.25 0-.51.1-.7.29l-1.83 1.83 3.75 3.75 1.83-1.83c.39-.39.39-1.02 0-1.41l-2.34-2.34c-.2-.2-.45-.29-.71-.29zm-3.6 3.19L3 17.25V21h3.75L17.81 9.94l-3.75-3.75z"/></svg>
<svg style="position:absolute;left:1698.50px;top:418.00px" width="15" height="15" viewBox="0 0 24 24" fill="#ef5350" ><path d="M16 9v10H8V9h8m-1.500-6h-5l-1 1H5v2h14V4h-3.500l-1-1zM18 7H6v12c0 1.100.900 2 2 2h8c1.100 0 2-.900 2-2V7z"/></svg>
<svg style="position:absolute;left:1734.00px;top:439.70px" width="12.4" height="12.4" viewBox="0 0 24 24" fill="#6e8192" ><path d="M13 7h-2v4H7v2h4v4h2v-4h4v-2h-4V7zm-1-5C6.480 2 2 6.480 2 12s4.480 10 10 10 10-4.480 10-10S17.520 2 12 2zm0 18c-4.410 0-8-3.590-8-8s3.590-8 8-8 8 3.590 8 8-3.590 8-8 8z"/></svg>
<svg style="position:absolute;left:1748.80px;top:439.70px" width="12.4" height="12.4" viewBox="0 0 24 24" fill="#6e8192" ><path d="M7 11v2h10v-2H7zm5-9C6.480 2 2 6.480 2 12s4.480 10 10 10 10-4.480 10-10S17.520 2 12 2zm0 18c-4.410 0-8-3.590-8-8s3.590-8 8-8 8 3.590 8 8-3.590 8-8 8z"/></svg>
<svg style="position:absolute;left:1764.10px;top:438.20px" width="15" height="15" viewBox="0 0 24 24" fill="#3b8cf0" ><path d="M15.500 14h-.790l-.280-.270C15.410 12.590 16 11.110 16 9.500 16 5.910 13.090 3 9.500 3S3 5.910 3 9.500 5.910 16 9.500 16c1.610 0 3.090-.590 4.230-1.570l.270.280v.790l5 4.990L20.490 19l-4.990-5zm-6 0C7.010 14 5 11.990 5 9.500S7.010 5 9.500 5 14 7.010 14 9.500 11.990 14 9.500 14z"/><path d="M12 10h-2v2H9v-2H7V9h2V7h1v2h2v1z"/></svg>
<svg style="position:absolute;left:1783.30px;top:438.00px" width="15" height="15" viewBox="0 0 24 24" fill="#6e8192" ><path d="M10 20v-6h4v6h5v-8h3L12 3 2 12h3v8z"/></svg>
<svg style="position:absolute;left:1798.60px;top:438.80px" width="14.5" height="14.5" viewBox="0 0 24 24" fill="#6e8192" ><path d="M3 18h18v-2H3v2zm0-5h18v-2H3v2zm0-7v2h18V6H3z"/></svg>
<svg style="position:absolute;left:1057.3px;top:388px" width="773.500" height="293" viewBox="0 0 773.500 293" font-family='"Liberation Sans", Arial, sans-serif'><defs><linearGradient id="g3" gradientUnits="userSpaceOnUse" x1="0" y1="71.6" x2="0" y2="238.2"><stop offset="0" stop-color="#3585f5" stop-opacity="0.22"/><stop offset="0.68" stop-color="#3585f5" stop-opacity="0"/><stop offset="1" stop-color="#3585f5" stop-opacity="0"/></linearGradient><linearGradient id="g4" gradientUnits="userSpaceOnUse" x1="0" y1="161.1" x2="0" y2="238.2"><stop offset="0" stop-color="#0fe09a" stop-opacity="0.28"/><stop offset="0.68" stop-color="#0fe09a" stop-opacity="0"/><stop offset="1" stop-color="#0fe09a" stop-opacity="0"/></linearGradient></defs><path d="M49.0 71.30H755.0" stroke="#e1e4e6" stroke-width="1" fill="none"/><path d="M49.0 99.12H755.0" stroke="#e1e4e6" stroke-width="1" fill="none"/><path d="M49.0 126.93H755.0" stroke="#e1e4e6" stroke-width="1" fill="none"/><path d="M49.0 154.75H755.0" stroke="#e1e4e6" stroke-width="1" fill="none"/><path d="M49.0 182.57H755.0" stroke="#e1e4e6" stroke-width="1" fill="none"/><path d="M49.0 210.38H755.0" stroke="#e1e4e6" stroke-width="1" fill="none"/><path d="M49.0 238.20H755.0" stroke="#e1e4e6" stroke-width="1" fill="none"/><path d="M49.00 238.20v5" stroke="#dde2e8" stroke-width="1" fill="none"/><path d="M285.98 238.20v5" stroke="#dde2e8" stroke-width="1" fill="none"/><path d="M522.96 238.20v5" stroke="#dde2e8" stroke-width="1" fill="none"/><path d="M49.00 185.63H53.94V186.46H58.87V186.46H63.81V180.62H68.75V186.46H73.69V183.96H78.62V184.79H83.56V185.90H88.50V142.79H93.43V159.20H98.37V155.31H103.31V147.80H108.24V122.48H113.18V113.02H118.12V111.91H123.06V102.73H127.99V98.28H132.93V98.28H137.87V108.57H142.80V122.48H147.74V106.63H152.68V118.03H157.62V74.64H162.55V112.47H167.49V104.12H172.43V95.50H177.36V115.53H182.30V120.81H187.24V103.57H192.17V129.99H197.11V133.33H202.05V112.19H206.99V116.36H211.92V126.66H216.86V109.69H221.80V102.73H226.73V126.38H231.67V122.20H236.61V106.35H241.55V128.32H246.48V128.32H251.42V120.81H256.36V173.67H261.29V124.71H266.23V152.52H271.17V157.53H276.10V149.19H281.04V180.90H285.98V174.50H290.92V156.70H295.85V180.34H300.79V171.16H305.73V182.01H310.66V181.45H315.60V150.86H320.54V182.57H325.48V183.12H330.41V150.30H335.35V147.80H340.29V177.28H345.22V126.66H350.16V120.81H355.10V115.81H360.03V126.38H364.97V108.02H369.91V125.54H374.85V126.38H379.78V118.31H384.72V93.55H389.66V103.01H394.59V103.57H399.53V119.14H404.47V107.18H409.41V114.14H414.34V107.74H419.28V101.62H424.22V98.56H429.15V100.51H434.09V105.51H439.03V95.50H443.97V126.38H448.90V117.20H453.84V97.17H458.78V99.12H463.71V81.87H468.65V129.99H473.59V130.55H478.52V128.32H483.46V127.21H488.40V104.68H493.34V183.12H498.27V102.73H503.21V93.83H508.15V119.98H513.08V158.37H518.02V182.01H522.96V182.29H527.90V182.29H532.83V183.68H537.77V185.07H542.71V182.57H547.64V183.68H552.58V186.74H557.52V187.85H562.45V123.04H567.39V177.28H572.33V186.18H577.27V129.71H582.20V124.99H587.14V124.15H592.08V115.81H597.01V123.32H601.95V110.24H606.89V107.18H611.83V106.35H616.76V98.00H621.70V124.71H626.64V105.79H631.57V127.21H636.51V109.41H641.45V120.54H646.38V130.55H651.32V104.68H656.26V115.53H661.20V129.16H666.13V122.20H671.07V116.36H676.01V94.11H680.94V71.58H685.88V97.17H690.82V122.20H695.76V114.69H700.69V121.65H705.63V129.16H710.57V126.66H715.50V118.87H720.44V166.71H725.38V147.52H730.31V131.38H735.25V162.54H740.19V183.96H745.13V146.13H750.06V139.73H755.00V184.24V238.20H49.00Z" fill="url(#g3)" stroke="none"/><path d="M49.00 185.63H53.94V186.46H58.87V186.46H63.81V180.62H68.75V186.46H73.69V183.96H78.62V184.79H83.56V185.90H88.50V142.79H93.43V159.20H98.37V155.31H103.31V147.80H108.24V122.48H113.18V113.02H118.12V111.91H123.06V102.73H127.99V98.28H132.93V98.28H137.87V108.57H142.80V122.48H147.74V106.63H152.68V118.03H157.62V74.64H162.55V112.47H167.49V104.12H172.43V95.50H177.36V115.53H182.30V120.81H187.24V103.57H192.17V129.99H197.11V133.33H202.05V112.19H206.99V116.36H211.92V126.66H216.86V109.69H221.80V102.73H226.73V126.38H231.67V122.20H236.61V106.35H241.55V128.32H246.48V128.32H251.42V120.81H256.36V173.67H261.29V124.71H266.23V152.52H271.17V157.53H276.10V149.19H281.04V180.90H285.98V174.50H290.92V156.70H295.85V180.34H300.79V171.16H305.73V182.01H310.66V181.45H315.60V150.86H320.54V182.57H325.48V183.12H330.41V150.30H335.35V147.80H340.29V177.28H345.22V126.66H350.16V120.81H355.10V115.81H360.03V126.38H364.97V108.02H369.91V125.54H374.85V126.38H379.78V118.31H384.72V93.55H389.66V103.01H394.59V103.57H399.53V119.14H404.47V107.18H409.41V114.14H414.34V107.74H419.28V101.62H424.22V98.56H429.15V100.51H434.09V105.51H439.03V95.50H443.97V126.38H448.90V117.20H453.84V97.17H458.78V99.12H463.71V81.87H468.65V129.99H473.59V130.55H478.52V128.32H483.46V127.21H488.40V104.68H493.34V183.12H498.27V102.73H503.21V93.83H508.15V119.98H513.08V158.37H518.02V182.01H522.96V182.29H527.90V182.29H532.83V183.68H537.77V185.07H542.71V182.57H547.64V183.68H552.58V186.74H557.52V187.85H562.45V123.04H567.39V177.28H572.33V186.18H577.27V129.71H582.20V124.99H587.14V124.15H592.08V115.81H597.01V123.32H601.95V110.24H606.89V107.18H611.83V106.35H616.76V98.00H621.70V124.71H626.64V105.79H631.57V127.21H636.51V109.41H641.45V120.54H646.38V130.55H651.32V104.68H656.26V115.53H661.20V129.16H666.13V122.20H671.07V116.36H676.01V94.11H680.94V71.58H685.88V97.17H690.82V122.20H695.76V114.69H700.69V121.65H705.63V129.16H710.57V126.66H715.50V118.87H720.44V166.71H725.38V147.52H730.31V131.38H735.25V162.54H740.19V183.96H745.13V146.13H750.06V139.73H755.00V184.24" fill="none" stroke="#3585f5" stroke-width="1" stroke-opacity="0.78" stroke-linejoin="miter"/><path d="M113.18 182.57H118.12V166.71H123.06V168.94H127.99V161.15H132.93V161.15H137.87V161.70H142.80V163.37H147.74V164.49H152.68V165.32H157.62V164.49H162.55V162.54H167.49V161.98H172.43V161.70H177.36V162.54H182.30V162.82H187.24V163.37H192.17V163.93H197.11V164.49H202.05V165.04H206.99V165.32H211.92V165.60H216.86V165.88H221.80V166.43H226.73V166.71H231.67V166.99H236.61V167.55H241.55V167.55V238.20H113.18Z" fill="url(#g4)" stroke="none"/><path d="M113.18 182.57H118.12V166.71H123.06V168.94H127.99V161.15H132.93V161.15H137.87V161.70H142.80V163.37H147.74V164.49H152.68V165.32H157.62V164.49H162.55V162.54H167.49V161.98H172.43V161.70H177.36V162.54H182.30V162.82H187.24V163.37H192.17V163.93H197.11V164.49H202.05V165.04H206.99V165.32H211.92V165.60H216.86V165.88H221.80V166.43H226.73V166.71H231.67V166.99H236.61V167.55H241.55V167.55" fill="none" stroke="#0fe09a" stroke-width="1" stroke-opacity="0.78" stroke-linejoin="miter"/><path d="M350.16 208.16H355.10V188.41H360.03V189.24H364.97V190.08H369.91V179.51H374.85V178.12H379.78V177.00H384.72V172.55H389.66V170.61H394.59V169.21H399.53V164.49H404.47V164.49H409.41V164.49H414.34V165.04H419.28V165.04H424.22V165.04H429.15V163.65H434.09V163.65H439.03V163.65H443.97V163.65H448.90V164.21H453.84V163.65H458.78V163.65H463.71V163.65H468.65V163.93H473.59V164.49H478.52V164.49V238.20H350.16Z" fill="url(#g4)" stroke="none"/><path d="M350.16 208.16H355.10V188.41H360.03V189.24H364.97V190.08H369.91V179.51H374.85V178.12H379.78V177.00H384.72V172.55H389.66V170.61H394.59V169.21H399.53V164.49H404.47V164.49H409.41V164.49H414.34V165.04H419.28V165.04H424.22V165.04H429.15V163.65H434.09V163.65H439.03V163.65H443.97V163.65H448.90V164.21H453.84V163.65H458.78V163.65H463.71V163.65H468.65V163.93H473.59V164.49H478.52V164.49" fill="none" stroke="#0fe09a" stroke-width="1" stroke-opacity="0.78" stroke-linejoin="miter"/><path d="M587.14 212.61H592.08V167.55H597.01V174.22H601.95V173.67H606.89V173.39H611.83V173.39H616.76V174.22H621.70V173.11H626.64V173.11H631.57V173.11H636.51V168.38H641.45V168.38H646.38V168.38H651.32V166.71H656.26V165.04H661.20V164.21H666.13V163.65H671.07V163.65H676.01V163.65H680.94V164.21H685.88V164.49H690.82V164.76H695.76V163.65H700.69V163.93H705.63V164.21H710.57V165.04H715.50V165.04V238.20H587.14Z" fill="url(#g4)" stroke="none"/><path d="M587.14 212.61H592.08V167.55H597.01V174.22H601.95V173.67H606.89V173.39H611.83V173.39H616.76V174.22H621.70V173.11H626.64V173.11H631.57V173.11H636.51V168.38H641.45V168.38H646.38V168.38H651.32V166.71H656.26V165.04H661.20V164.21H666.13V163.65H671.07V163.65H676.01V163.65H680.94V164.21H685.88V164.49H690.82V164.76H695.76V163.65H700.69V163.93H705.63V164.21H710.57V165.04H715.50V165.04" fill="none" stroke="#0fe09a" stroke-width="1" stroke-opacity="0.78" stroke-linejoin="miter"/><circle cx="223.2" cy="266.5" r="4.300" fill="#3585f5"/><circle cx="389.0" cy="266.5" r="4.300" fill="#0fe09a"/></svg>
<span style="position:absolute;left:1098.30px;transform:translateX(-100%);top:453px;font-size:8.3px;line-height:10px;height:10px;color:#7a7d80;font-weight:400;white-space:nowrap;letter-spacing:-0.052px;margin-right:0.052px;">81.0</span>
<span style="position:absolute;left:1098.30px;transform:translateX(-100%);top:480px;font-size:8.3px;line-height:10px;height:10px;color:#7a7d80;font-weight:400;white-space:nowrap;letter-spacing:-0.052px;margin-right:0.052px;">70.8</span>
<span style="position:absolute;left:1098.30px;transform:translateX(-100%);top:508px;font-size:8.3px;line-height:10px;height:10px;color:#7a7d80;font-weight:400;white-space:nowrap;letter-spacing:-0.052px;margin-right:0.052px;">60.7</span>
<span style="position:absolute;left:1098.30px;transform:translateX(-100%);top:536px;font-size:8.3px;line-height:10px;height:10px;color:#7a7d80;font-weight:400;white-space:nowrap;letter-spacing:-0.052px;margin-right:0.052px;">50.5</span>
<span style="position:absolute;left:1098.30px;transform:translateX(-100%);top:564px;font-size:8.3px;line-height:10px;height:10px;color:#7a7d80;font-weight:400;white-space:nowrap;letter-spacing:-0.052px;margin-right:0.052px;">40.3</span>
<span style="position:absolute;left:1098.30px;transform:translateX(-100%);top:591px;font-size:8.3px;line-height:10px;height:10px;color:#7a7d80;font-weight:400;white-space:nowrap;letter-spacing:-0.052px;margin-right:0.052px;">30.2</span>
<span style="position:absolute;left:1098.30px;transform:translateX(-100%);top:619px;font-size:8.3px;line-height:10px;height:10px;color:#7a7d80;font-weight:400;white-space:nowrap;letter-spacing:-0.052px;margin-right:0.052px;">20.0</span>
<span style="position:absolute;left:1106.30px;transform:translateX(-50%);top:637px;font-size:9px;line-height:10px;height:10px;color:#363b3e;font-weight:400;white-space:nowrap;letter-spacing:0.017px;margin-right:-0.017px;">02-13</span>
<span style="position:absolute;left:1343.28px;transform:translateX(-50%);top:637px;font-size:9px;line-height:10px;height:10px;color:#363b3e;font-weight:400;white-space:nowrap;letter-spacing:0.017px;margin-right:-0.017px;">02-14</span>
<span style="position:absolute;left:1580.26px;transform:translateX(-50%);top:637px;font-size:9px;line-height:10px;height:10px;color:#363b3e;font-weight:400;white-space:nowrap;letter-spacing:0.017px;margin-right:-0.017px;">02-15</span>
<span style="position:absolute;left:1287.40px;top:650px;font-size:9px;line-height:10px;height:10px;color:#2e3133;font-weight:400;white-space:nowrap;letter-spacing:0.107px;margin-right:-0.107px;">DEMO Noise /// LZeq_1/3_6.3Hz_dt</span>
<span style="position:absolute;left:1453.70px;top:650px;font-size:9px;line-height:10px;height:10px;color:#2e3133;font-weight:400;white-space:nowrap;letter-spacing:0.097px;margin-right:-0.097px;">DEMO Noise /// LAFT5eq_07:00-20:00</span>
</article>
<article class="chart">
<div class="card" style="left:262.7px;top:703.3px;width:772.600px;height:292.700px"></div>
<span style="position:absolute;left:398.75px;transform:translateX(-50%);top:719px;font-size:9.6px;line-height:11px;height:11px;color:#1a1a1a;font-weight:700;white-space:nowrap;letter-spacing:-0.269px;margin-right:0.269px;">Time resolution</span>
<span style="position:absolute;left:398.75px;transform:translateX(-50%);top:734px;font-size:9.5px;line-height:11px;height:11px;color:#333;font-weight:400;white-space:nowrap;letter-spacing:0.017px;margin-right:-0.017px;">30 min</span>
<span style="position:absolute;left:648.60px;transform:translateX(-50%);top:719px;font-size:9.6px;line-height:11px;height:11px;color:#1a1a1a;font-weight:700;white-space:nowrap;letter-spacing:-0.402px;margin-right:0.402px;">Time Range</span>
<span style="position:absolute;left:648.60px;transform:translateX(-50%);top:734px;font-size:9.5px;line-height:11px;height:11px;color:#333;font-weight:400;white-space:nowrap;letter-spacing:-0.070px;margin-right:0.070px;">2024-02-07 - 2024-02-14</span>
<span style="position:absolute;left:898.60px;transform:translateX(-50%);top:716px;font-size:9.6px;line-height:11px;height:11px;color:#1a1a1a;font-weight:700;white-space:nowrap;letter-spacing:-0.398px;margin-right:0.398px;">Actions</span>
<svg style="position:absolute;left:879.60px;top:733.00px" width="15" height="15" viewBox="0 0 24 24" fill="#f5a623" ><path d="M14.06 9.02l.92.92L5.92 19H5v-.92l9.06-9.06M17.66 3c-.25 0-.51.1-.7.29l-1.83 1.83 3.75 3.75 1.83-1.83c.39-.39.39-1.02 0-1.41l-2.34-2.34c-.2-.2-.45-.29-.71-.29zm-3.6 3.19L3 17.25V21h3.75L17.81 9.94l-3.75-3.75z"/></svg>
<svg style="position:absolute;left:903.20px;top:733.00px" width="15" height="15" viewBox="0 0 24 24" fill="#ef5350" ><path d="M16 9v10H8V9h8m-1.500-6h-5l-1 1H5v2h14V4h-3.500l-1-1zM18 7H6v12c0 1.100.900 2 2 2h8c1.100 0 2-.900 2-2V7z"/></svg>
<svg style="position:absolute;left:938.70px;top:754.70px" width="12.4" height="12.4" viewBox="0 0 24 24" fill="#6e8192" ><path d="M13 7h-2v4H7v2h4v4h2v-4h4v-2h-4V7zm-1-5C6.480 2 2 6.480 2 12s4.480 10 10 10 10-4.480 10-10S17.520 2 12 2zm0 18c-4.410 0-8-3.590-8-8s3.590-8 8-8 8 3.590 8 8-3.590 8-8 8z"/></svg>
<svg style="position:absolute;left:953.50px;top:754.70px" width="12.4" height="12.4" viewBox="0 0 24 24" fill="#6e8192" ><path d="M7 11v2h10v-2H7zm5-9C6.480 2 2 6.480 2 12s4.480 10 10 10 10-4.480 10-10S17.520 2 12 2zm0 18c-4.410 0-8-3.590-8-8s3.590-8 8-8 8 3.590 8 8-3.590 8-8 8z"/></svg>
<svg style="position:absolute;left:968.80px;top:753.20px" width="15" height="15" viewBox="0 0 24 24" fill="#3b8cf0" ><path d="M15.500 14h-.790l-.280-.270C15.410 12.590 16 11.110 16 9.500 16 5.910 13.090 3 9.500 3S3 5.910 3 9.500 5.910 16 9.500 16c1.610 0 3.090-.590 4.230-1.570l.270.280v.790l5 4.990L20.490 19l-4.990-5zm-6 0C7.010 14 5 11.990 5 9.500S7.010 5 9.500 5 14 7.010 14 9.500 11.990 14 9.500 14z"/><path d="M12 10h-2v2H9v-2H7V9h2V7h1v2h2v1z"/></svg>
<svg style="position:absolute;left:988.00px;top:753.00px" width="15" height="15" viewBox="0 0 24 24" fill="#6e8192" ><path d="M10 20v-6h4v6h5v-8h3L12 3 2 12h3v8z"/></svg>
<svg style="position:absolute;left:1003.30px;top:753.80px" width="14.5" height="14.5" viewBox="0 0 24 24" fill="#6e8192" ><path d="M3 18h18v-2H3v2zm0-5h18v-2H3v2zm0-7v2h18V6H3z"/></svg>
<svg style="position:absolute;left:262px;top:703px" width="773.500" height="293" viewBox="0 0 773.500 293" font-family='"Liberation Sans", Arial, sans-serif'><defs><linearGradient id="g5" gradientUnits="userSpaceOnUse" x1="0" y1="124.4" x2="0" y2="238.2"><stop offset="0" stop-color="#3585f5" stop-opacity="0.22"/><stop offset="0.68" stop-color="#3585f5" stop-opacity="0"/><stop offset="1" stop-color="#3585f5" stop-opacity="0"/></linearGradient></defs><path d="M49.0 71.30H755.0" stroke="#e1e4e6" stroke-width="1" fill="none"/><path d="M49.0 99.12H755.0" stroke="#e1e4e6" stroke-width="1" fill="none"/><path d="M49.0 126.93H755.0" stroke="#e1e4e6" stroke-width="1" fill="none"/><path d="M49.0 154.75H755.0" stroke="#e1e4e6" stroke-width="1" fill="none"/><path d="M49.0 182.57H755.0" stroke="#e1e4e6" stroke-width="1" fill="none"/><path d="M49.0 210.38H755.0" stroke="#e1e4e6" stroke-width="1" fill="none"/><path d="M49.0 238.20H755.0" stroke="#e1e4e6" stroke-width="1" fill="none"/><path d="M49.00 238.20v5" stroke="#dde2e8" stroke-width="1" fill="none"/><path d="M137.48 238.20v5" stroke="#dde2e8" stroke-width="1" fill="none"/><path d="M225.96 238.20v5" stroke="#dde2e8" stroke-width="1" fill="none"/><path d="M314.44 238.20v5" stroke="#dde2e8" stroke-width="1" fill="none"/><path d="M402.92 238.20v5" stroke="#dde2e8" stroke-width="1" fill="none"/><path d="M491.40 238.20v5" stroke="#dde2e8" stroke-width="1" fill="none"/><path d="M579.88 238.20v5" stroke="#dde2e8" stroke-width="1" fill="none"/><path d="M668.36 238.20v5" stroke="#dde2e8" stroke-width="1" fill="none"/><path d="M49.00 214.00H50.84V203.43H52.69V214.28H54.53V214.00H56.37V214.28H58.22V214.00H60.06V214.56H61.90V214.28H63.75V214.00H65.59V176.73H67.43V208.71H69.28V209.27H71.12V181.73H72.96V199.81H74.81V169.77H76.65V127.77H78.49V131.38H80.34V161.98H82.18V162.54H84.02V159.76H85.87V178.67H87.71V176.17H89.55V166.99H91.40V169.21H93.24V171.72H95.08V197.31H96.93V156.70H98.77V156.14H100.61V206.49H102.46V124.43H104.30V135.56H106.14V170.33H107.99V144.74H109.83V188.41H111.67V194.53H113.52V188.96H115.36V191.47H117.20V203.99H119.05V207.32H120.89V204.82H122.73V203.43H124.58V198.70H126.42V208.71H128.26V179.23H130.11V188.41H131.95V200.93H133.79V198.70H135.64V208.71H137.48V210.38H139.32V214.83H141.17V215.67H143.01V214.00H144.85V212.89H146.70V213.44H148.54V212.89H150.38V212.33H152.23V208.99H154.07V183.96H155.91V190.91H157.76V211.50H159.60V206.21H161.44V198.70H163.29V198.14H165.13V167.82H166.97V169.21H168.82V168.94H170.66V185.07H172.50V177.28H174.35V173.67H176.19V176.73H178.03V180.34H179.88V174.50H181.72V174.78H183.56V190.36H185.41V190.63H187.25V161.70H189.09V172.55H190.94V178.67H192.78V156.14H194.62V180.34H196.47V181.18H198.31V181.73H200.15V187.30H202.00V194.25H203.84V196.47H205.68V204.82H207.53V205.65H209.37V204.82H211.21V195.64H213.06V187.85H214.90V182.84H216.74V177.28H218.59V204.26H220.43V205.65H222.27V198.14H224.12V204.82H225.96V208.16H227.80V210.94H229.65V210.38H231.49V211.22H233.33V212.33H235.18V212.89H237.02V212.33H238.86V211.77H240.71V212.33H242.55V211.50H244.39V193.69H246.24V187.02H248.08V188.96H249.92V206.77H251.77V194.25H253.61V175.61H255.45V177.56H257.30V193.42H259.14V180.90H260.98V191.75H262.83V175.06H264.67V179.51H266.51V179.78H268.36V178.95H270.20V185.35H272.04V189.52H273.89V173.39H275.73V179.78H277.57V188.69H279.42V177.00H281.26V190.63H283.10V177.00H284.95V194.81H286.79V197.03H288.63V199.81H290.48V205.93H292.32V200.37H294.16V205.65H296.01V202.32H297.85V198.14H299.69V201.76H301.54V182.84H303.38V208.16H305.22V156.14H307.07V148.07H308.91V202.87H310.75V199.53H312.60V208.44H314.44V208.16H316.28V201.20H318.13V204.54H319.97V207.05H321.81V208.99H323.66V210.66H325.50V210.94H327.34V210.66H329.19V212.05H331.03V190.91H332.87V213.72H334.72V187.02H336.56V215.39H338.40V203.99H340.25V210.66H342.09V204.82H343.93V143.07H345.78V148.91H347.62V173.39H349.46V191.47H351.31V201.76H353.15V209.27H354.99V208.16H356.84V202.59H358.68V198.98H360.52V183.96H362.37V209.27H364.21V202.59H366.05V202.59H367.90V211.77H369.74V208.71H371.58V203.15H373.43V198.98H375.27V210.38H377.11V208.16H378.96V204.54H380.80V200.37H382.64V208.71H384.49V202.04H386.33V200.93H388.17V204.54H390.02V187.30H391.86V187.02H393.70V200.65H395.55V204.26H397.39V206.21H399.23V201.76H401.08V201.76H402.92V210.94H404.77V210.66H406.61V209.83H408.45V210.38H410.30V211.77H412.14V212.05H413.98V212.33H415.83V212.89H417.67V189.52H419.51V214.83H421.36V194.81H423.20V215.39H425.04V215.95H426.89V215.95H428.73V205.93H430.57V206.21H432.42V208.16H434.26V215.67H436.10V198.14H437.95V206.21H439.79V203.43H441.63V208.71H443.48V213.44H445.32V208.16H447.16V192.02H449.01V215.67H450.85V215.39H452.69V202.32H454.54V191.47H456.38V213.16H458.22V206.77H460.07V198.14H461.91V158.64H463.75V152.25H465.60V156.70H467.44V168.66H469.28V184.79H471.13V201.76H472.97V209.83H474.81V214.83H476.66V185.07H478.50V215.67H480.34V183.96H482.19V210.94H484.03V208.44H485.87V215.67H487.72V203.99H489.56V215.67H491.40V215.67H493.25V215.67H495.09V215.67H496.93V214.83H498.78V215.39H500.62V215.67H502.46V215.67H504.31V215.67H506.15V185.07H507.99V214.83H509.84V214.28H511.68V208.71H513.52V196.47H515.37V210.38H517.21V177.00H519.05V167.27H520.90V165.88H522.74V146.40H524.58V157.25H526.43V141.12H528.27V167.27H530.11V156.70H531.96V148.91H533.80V146.40H535.64V181.73H537.49V160.04H539.33V159.76H541.17V137.23H543.02V134.17H544.86V159.48H546.70V155.31H548.55V151.69H550.39V175.61H552.23V188.13H554.08V194.53H555.92V182.01H557.76V196.47H559.61V208.71H561.45V208.16H563.29V201.48H565.14V203.71H566.98V160.59H568.82V150.86H570.67V151.41H572.51V149.74H574.35V214.28H576.20V198.70H578.04V215.67H579.88V215.95H581.73V212.05H583.57V215.67H585.41V215.95H587.26V215.95H589.10V216.22H590.94V212.89H592.79V215.67H594.63V176.17H596.47V214.28H598.32V180.90H600.16V211.77H602.00V180.62H603.85V187.85H605.69V173.39H607.53V184.51H609.38V162.82H611.22V170.33H613.06V174.50H614.91V184.51H616.75V193.69H618.59V190.63H620.44V161.98H622.28V164.21H624.12V170.61H625.97V175.89H627.81V186.46H629.65V179.23H631.50V187.02H633.34V191.47H635.18V190.36H637.03V188.69H638.87V190.36H640.71V194.81H642.56V185.90H644.40V200.09H646.24V191.19H648.09V205.38H649.93V193.69H651.77V198.42H653.62V190.36H655.46V209.27H657.30V215.39H659.15V187.02H660.99V205.38H662.83V207.32H664.68V203.99H666.52V213.72H668.36V214.83H670.21V215.67H672.05V215.67H673.89V214.28H675.74V215.67H677.58V211.77H679.42V198.42H681.27V215.67H683.11V214.83H684.95V187.02H686.80V184.79H688.64V208.71H690.48V179.23H692.33V207.05H694.17V199.81H696.01V202.32H697.86V194.53H699.70V182.57H701.54V191.47H703.39V180.06H705.23V176.73H707.07V173.11H708.92V177.56H710.76V154.47H712.60V177.00H714.45V181.45H716.29V180.90H718.13V183.68H719.98V173.39H721.82V157.53H723.66V170.61H725.51V186.46H727.35V185.35H729.19V176.73H731.04V172.00H732.88V173.11H734.72V182.57H736.57V198.42H738.41V199.81H740.25V204.54H742.10V200.93H743.94V182.29H745.78V202.59H747.63V183.96H749.47V203.99H751.31V184.79H753.16V198.70H755.00V215.11V238.20H49.00Z" fill="url(#g5)" stroke="none"/><path d="M49.00 214.00H50.84V203.43H52.69V214.28H54.53V214.00H56.37V214.28H58.22V214.00H60.06V214.56H61.90V214.28H63.75V214.00H65.59V176.73H67.43V208.71H69.28V209.27H71.12V181.73H72.96V199.81H74.81V169.77H76.65V127.77H78.49V131.38H80.34V161.98H82.18V162.54H84.02V159.76H85.87V178.67H87.71V176.17H89.55V166.99H91.40V169.21H93.24V171.72H95.08V197.31H96.93V156.70H98.77V156.14H100.61V206.49H102.46V124.43H104.30V135.56H106.14V170.33H107.99V144.74H109.83V188.41H111.67V194.53H113.52V188.96H115.36V191.47H117.20V203.99H119.05V207.32H120.89V204.82H122.73V203.43H124.58V198.70H126.42V208.71H128.26V179.23H130.11V188.41H131.95V200.93H133.79V198.70H135.64V208.71H137.48V210.38H139.32V214.83H141.17V215.67H143.01V214.00H144.85V212.89H146.70V213.44H148.54V212.89H150.38V212.33H152.23V208.99H154.07V183.96H155.91V190.91H157.76V211.50H159.60V206.21H161.44V198.70H163.29V198.14H165.13V167.82H166.97V169.21H168.82V168.94H170.66V185.07H172.50V177.28H174.35V173.67H176.19V176.73H178.03V180.34H179.88V174.50H181.72V174.78H183.56V190.36H185.41V190.63H187.25V161.70H189.09V172.55H190.94V178.67H192.78V156.14H194.62V180.34H196.47V181.18H198.31V181.73H200.15V187.30H202.00V194.25H203.84V196.47H205.68V204.82H207.53V205.65H209.37V204.82H211.21V195.64H213.06V187.85H214.90V182.84H216.74V177.28H218.59V204.26H220.43V205.65H222.27V198.14H224.12V204.82H225.96V208.16H227.80V210.94H229.65V210.38H231.49V211.22H233.33V212.33H235.18V212.89H237.02V212.33H238.86V211.77H240.71V212.33H242.55V211.50H244.39V193.69H246.24V187.02H248.08V188.96H249.92V206.77H251.77V194.25H253.61V175.61H255.45V177.56H257.30V193.42H259.14V180.90H260.98V191.75H262.83V175.06H264.67V179.51H266.51V179.78H268.36V178.95H270.20V185.35H272.04V189.52H273.89V173.39H275.73V179.78H277.57V188.69H279.42V177.00H281.26V190.63H283.10V177.00H284.95V194.81H286.79V197.03H288.63V199.81H290.48V205.93H292.32V200.37H294.16V205.65H296.01V202.32H297.85V198.14H299.69V201.76H301.54V182.84H303.38V208.16H305.22V156.14H307.07V148.07H308.91V202.87H310.75V199.53H312.60V208.44H314.44V208.16H316.28V201.20H318.13V204.54H319.97V207.05H321.81V208.99H323.66V210.66H325.50V210.94H327.34V210.66H329.19V212.05H331.03V190.91H332.87V213.72H334.72V187.02H336.56V215.39H338.40V203.99H340.25V210.66H342.09V204.82H343.93V143.07H345.78V148.91H347.62V173.39H349.46V191.47H351.31V201.76H353.15V209.27H354.99V208.16H356.84V202.59H358.68V198.98H360.52V183.96H362.37V209.27H364.21V202.59H366.05V202.59H367.90V211.77H369.74V208.71H371.58V203.15H373.43V198.98H375.27V210.38H377.11V208.16H378.96V204.54H380.80V200.37H382.64V208.71H384.49V202.04H386.33V200.93H388.17V204.54H390.02V187.30H391.86V187.02H393.70V200.65H395.55V204.26H397.39V206.21H399.23V201.76H401.08V201.76H402.92V210.94H404.77V210.66H406.61V209.83H408.45V210.38H410.30V211.77H412.14V212.05H413.98V212.33H415.83V212.89H417.67V189.52H419.51V214.83H421.36V194.81H423.20V215.39H425.04V215.95H426.89V215.95H428.73V205.93H430.57V206.21H432.42V208.16H434.26V215.67H436.10V198.14H437.95V206.21H439.79V203.43H441.63V208.71H443.48V213.44H445.32V208.16H447.16V192.02H449.01V215.67H450.85V215.39H452.69V202.32H454.54V191.47H456.38V213.16H458.22V206.77H460.07V198.14H461.91V158.64H463.75V152.25H465.60V156.70H467.44V168.66H469.28V184.79H471.13V201.76H472.97V209.83H474.81V214.83H476.66V185.07H478.50V215.67H480.34V183.96H482.19V210.94H484.03V208.44H485.87V215.67H487.72V203.99H489.56V215.67H491.40V215.67H493.25V215.67H495.09V215.67H496.93V214.83H498.78V215.39H500.62V215.67H502.46V215.67H504.31V215.67H506.15V185.07H507.99V214.83H509.84V214.28H511.68V208.71H513.52V196.47H515.37V210.38H517.21V177.00H519.05V167.27H520.90V165.88H522.74V146.40H524.58V157.25H526.43V141.12H528.27V167.27H530.11V156.70H531.96V148.91H533.80V146.40H535.64V181.73H537.49V160.04H539.33V159.76H541.17V137.23H543.02V134.17H544.86V159.48H546.70V155.31H548.55V151.69H550.39V175.61H552.23V188.13H554.08V194.53H555.92V182.01H557.76V196.47H559.61V208.71H561.45V208.16H563.29V201.48H565.14V203.71H566.98V160.59H568.82V150.86H570.67V151.41H572.51V149.74H574.35V214.28H576.20V198.70H578.04V215.67H579.88V215.95H581.73V212.05H583.57V215.67H585.41V215.95H587.26V215.95H589.10V216.22H590.94V212.89H592.79V215.67H594.63V176.17H596.47V214.28H598.32V180.90H600.16V211.77H602.00V180.62H603.85V187.85H605.69V173.39H607.53V184.51H609.38V162.82H611.22V170.33H613.06V174.50H614.91V184.51H616.75V193.69H618.59V190.63H620.44V161.98H622.28V164.21H624.12V170.61H625.97V175.89H627.81V186.46H629.65V179.23H631.50V187.02H633.34V191.47H635.18V190.36H637.03V188.69H638.87V190.36H640.71V194.81H642.56V185.90H644.40V200.09H646.24V191.19H648.09V205.38H649.93V193.69H651.77V198.42H653.62V190.36H655.46V209.27H657.30V215.39H659.15V187.02H660.99V205.38H662.83V207.32H664.68V203.99H666.52V213.72H668.36V214.83H670.21V215.67H672.05V215.67H673.89V214.28H675.74V215.67H677.58V211.77H679.42V198.42H681.27V215.67H683.11V214.83H684.95V187.02H686.80V184.79H688.64V208.71H690.48V179.23H692.33V207.05H694.17V199.81H696.01V202.32H697.86V194.53H699.70V182.57H701.54V191.47H703.39V180.06H705.23V176.73H707.07V173.11H708.92V177.56H710.76V154.47H712.60V177.00H714.45V181.45H716.29V180.90H718.13V183.68H719.98V173.39H721.82V157.53H723.66V170.61H725.51V186.46H727.35V185.35H729.19V176.73H731.04V172.00H732.88V173.11H734.72V182.57H736.57V198.42H738.41V199.81H740.25V204.54H742.10V200.93H743.94V182.29H745.78V202.59H747.63V183.96H749.47V203.99H751.31V184.79H753.16V198.70H755.00V215.11" fill="none" stroke="#3585f5" stroke-width="1" stroke-opacity="0.78" stroke-linejoin="miter"/><circle cx="335.0" cy="266.5" r="4.300" fill="#3585f5"/></svg>
<span style="position:absolute;left:303.00px;transform:translateX(-100%);top:768px;font-size:8.3px;line-height:10px;height:10px;color:#7a7d80;font-weight:400;white-space:nowrap;letter-spacing:-0.052px;margin-right:0.052px;">80.0</span>
<span style="position:absolute;left:303.00px;transform:translateX(-100%);top:795px;font-size:8.3px;line-height:10px;height:10px;color:#7a7d80;font-weight:400;white-space:nowrap;letter-spacing:-0.052px;margin-right:0.052px;">70.0</span>
<span style="position:absolute;left:303.00px;transform:translateX(-100%);top:823px;font-size:8.3px;line-height:10px;height:10px;color:#7a7d80;font-weight:400;white-space:nowrap;letter-spacing:-0.052px;margin-right:0.052px;">60.0</span>
<span style="position:absolute;left:303.00px;transform:translateX(-100%);top:851px;font-size:8.3px;line-height:10px;height:10px;color:#7a7d80;font-weight:400;white-space:nowrap;letter-spacing:-0.052px;margin-right:0.052px;">50.0</span>
<span style="position:absolute;left:303.00px;transform:translateX(-100%);top:879px;font-size:8.3px;line-height:10px;height:10px;color:#7a7d80;font-weight:400;white-space:nowrap;letter-spacing:-0.052px;margin-right:0.052px;">40.0</span>
<span style="position:absolute;left:303.00px;transform:translateX(-100%);top:906px;font-size:8.3px;line-height:10px;height:10px;color:#7a7d80;font-weight:400;white-space:nowrap;letter-spacing:-0.052px;margin-right:0.052px;">30.0</span>
<span style="position:absolute;left:303.00px;transform:translateX(-100%);top:934px;font-size:8.3px;line-height:10px;height:10px;color:#7a7d80;font-weight:400;white-space:nowrap;letter-spacing:-0.052px;margin-right:0.052px;">20.0</span>
<span style="position:absolute;left:311.00px;transform:translateX(-50%);top:952px;font-size:9px;line-height:10px;height:10px;color:#363b3e;font-weight:400;white-space:nowrap;letter-spacing:0.017px;margin-right:-0.017px;">02-07</span>
<span style="position:absolute;left:399.48px;transform:translateX(-50%);top:952px;font-size:9px;line-height:10px;height:10px;color:#363b3e;font-weight:400;white-space:nowrap;letter-spacing:0.017px;margin-right:-0.017px;">02-08</span>
<span style="position:absolute;left:487.96px;transform:translateX(-50%);top:952px;font-size:9px;line-height:10px;height:10px;color:#363b3e;font-weight:400;white-space:nowrap;letter-spacing:0.017px;margin-right:-0.017px;">02-09</span>
<span style="position:absolute;left:576.44px;transform:translateX(-50%);top:952px;font-size:9px;line-height:10px;height:10px;color:#363b3e;font-weight:400;white-space:nowrap;letter-spacing:0.017px;margin-right:-0.017px;">02-10</span>
<span style="position:absolute;left:664.92px;transform:translateX(-50%);top:952px;font-size:9px;line-height:10px;height:10px;color:#363b3e;font-weight:400;white-space:nowrap;letter-spacing:0.185px;margin-right:-0.185px;">02-11</span>
<span style="position:absolute;left:753.40px;transform:translateX(-50%);top:952px;font-size:9px;line-height:10px;height:10px;color:#363b3e;font-weight:400;white-space:nowrap;letter-spacing:0.017px;margin-right:-0.017px;">02-12</span>
<span style="position:absolute;left:841.88px;transform:translateX(-50%);top:952px;font-size:9px;line-height:10px;height:10px;color:#363b3e;font-weight:400;white-space:nowrap;letter-spacing:0.017px;margin-right:-0.017px;">02-13</span>
<span style="position:absolute;left:930.36px;transform:translateX(-50%);top:952px;font-size:9px;line-height:10px;height:10px;color:#363b3e;font-weight:400;white-space:nowrap;letter-spacing:0.017px;margin-right:-0.017px;">02-14</span>
<span style="position:absolute;left:604.40px;top:965px;font-size:9px;line-height:10px;height:10px;color:#2e3133;font-weight:400;white-space:nowrap;letter-spacing:0.125px;margin-right:-0.125px;">DEMO Noise /// LAeq_5'</span>
</article>
<article class="chart">
<div class="card" style="left:1057.7px;top:703.3px;width:772.600px;height:292.700px"></div>
<span style="position:absolute;left:1194.05px;transform:translateX(-50%);top:719px;font-size:9.6px;line-height:11px;height:11px;color:#1a1a1a;font-weight:700;white-space:nowrap;letter-spacing:-0.269px;margin-right:0.269px;">Time resolution</span>
<span style="position:absolute;left:1194.05px;transform:translateX(-50%);top:734px;font-size:9.5px;line-height:11px;height:11px;color:#333;font-weight:400;white-space:nowrap;letter-spacing:0.017px;margin-right:-0.017px;">30 min</span>
<span style="position:absolute;left:1443.90px;transform:translateX(-50%);top:719px;font-size:9.6px;line-height:11px;height:11px;color:#1a1a1a;font-weight:700;white-space:nowrap;letter-spacing:-0.402px;margin-right:0.402px;">Time Range</span>
<span style="position:absolute;left:1443.90px;transform:translateX(-50%);top:734px;font-size:9.5px;line-height:11px;height:11px;color:#333;font-weight:400;white-space:nowrap;letter-spacing:-0.070px;margin-right:0.070px;">2024-02-07 - 2024-02-14</span>
<span style="position:absolute;left:1693.90px;transform:translateX(-50%);top:716px;font-size:9.6px;line-height:11px;height:11px;color:#1a1a1a;font-weight:700;white-space:nowrap;letter-spacing:-0.398px;margin-right:0.398px;">Actions</span>
<svg style="position:absolute;left:1674.90px;top:733.00px" width="15" height="15" viewBox="0 0 24 24" fill="#f5a623" ><path d="M14.06 9.02l.92.92L5.92 19H5v-.92l9.06-9.06M17.66 3c-.25 0-.51.1-.7.29l-1.83 1.83 3.75 3.75 1.83-1.83c.39-.39.39-1.02 0-1.41l-2.34-2.34c-.2-.2-.45-.29-.71-.29zm-3.6 3.19L3 17.25V21h3.75L17.81 9.94l-3.75-3.75z"/></svg>
<svg style="position:absolute;left:1698.50px;top:733.00px" width="15" height="15" viewBox="0 0 24 24" fill="#ef5350" ><path d="M16 9v10H8V9h8m-1.500-6h-5l-1 1H5v2h14V4h-3.500l-1-1zM18 7H6v12c0 1.100.900 2 2 2h8c1.100 0 2-.900 2-2V7z"/></svg>
<svg style="position:absolute;left:1734.00px;top:754.70px" width="12.4" height="12.4" viewBox="0 0 24 24" fill="#6e8192" ><path d="M13 7h-2v4H7v2h4v4h2v-4h4v-2h-4V7zm-1-5C6.480 2 2 6.480 2 12s4.480 10 10 10 10-4.480 10-10S17.520 2 12 2zm0 18c-4.410 0-8-3.590-8-8s3.590-8 8-8 8 3.590 8 8-3.590 8-8 8z"/></svg>
<svg style="position:absolute;left:1748.80px;top:754.70px" width="12.4" height="12.4" viewBox="0 0 24 24" fill="#6e8192" ><path d="M7 11v2h10v-2H7zm5-9C6.480 2 2 6.480 2 12s4.480 10 10 10 10-4.480 10-10S17.520 2 12 2zm0 18c-4.410 0-8-3.590-8-8s3.590-8 8-8 8 3.590 8 8-3.590 8-8 8z"/></svg>
<svg style="position:absolute;left:1764.10px;top:753.20px" width="15" height="15" viewBox="0 0 24 24" fill="#3b8cf0" ><path d="M15.500 14h-.790l-.280-.270C15.410 12.590 16 11.110 16 9.500 16 5.910 13.090 3 9.500 3S3 5.910 3 9.500 5.910 16 9.500 16c1.610 0 3.090-.590 4.230-1.570l.270.280v.790l5 4.990L20.490 19l-4.990-5zm-6 0C7.010 14 5 11.990 5 9.500S7.010 5 9.500 5 14 7.010 14 9.500 11.990 14 9.500 14z"/><path d="M12 10h-2v2H9v-2H7V9h2V7h1v2h2v1z"/></svg>
<svg style="position:absolute;left:1783.30px;top:753.00px" width="15" height="15" viewBox="0 0 24 24" fill="#6e8192" ><path d="M10 20v-6h4v6h5v-8h3L12 3 2 12h3v8z"/></svg>
<svg style="position:absolute;left:1798.60px;top:753.80px" width="14.5" height="14.5" viewBox="0 0 24 24" fill="#6e8192" ><path d="M3 18h18v-2H3v2zm0-5h18v-2H3v2zm0-7v2h18V6H3z"/></svg>
<svg style="position:absolute;left:1057.3px;top:703px" width="773.500" height="293" viewBox="0 0 773.500 293" font-family='"Liberation Sans", Arial, sans-serif'><defs><linearGradient id="g6" gradientUnits="userSpaceOnUse" x1="0" y1="71.6" x2="0" y2="238.2"><stop offset="0" stop-color="#3585f5" stop-opacity="0.22"/><stop offset="0.68" stop-color="#3585f5" stop-opacity="0"/><stop offset="1" stop-color="#3585f5" stop-opacity="0"/></linearGradient></defs><path d="M49.0 71.30H755.0" stroke="#e1e4e6" stroke-width="1" fill="none"/><path d="M49.0 99.12H755.0" stroke="#e1e4e6" stroke-width="1" fill="none"/><path d="M49.0 126.93H755.0" stroke="#e1e4e6" stroke-width="1" fill="none"/><path d="M49.0 154.75H755.0" stroke="#e1e4e6" stroke-width="1" fill="none"/><path d="M49.0 182.57H755.0" stroke="#e1e4e6" stroke-width="1" fill="none"/><path d="M49.0 210.38H755.0" stroke="#e1e4e6" stroke-width="1" fill="none"/><path d="M49.0 238.20H755.0" stroke="#e1e4e6" stroke-width="1" fill="none"/><path d="M49.00 238.20v5" stroke="#dde2e8" stroke-width="1" fill="none"/><path d="M137.48 238.20v5" stroke="#dde2e8" stroke-width="1" fill="none"/><path d="M225.96 238.20v5" stroke="#dde2e8" stroke-width="1" fill="none"/><path d="M314.44 238.20v5" stroke="#dde2e8" stroke-width="1" fill="none"/><path d="M402.92 238.20v5" stroke="#dde2e8" stroke-width="1" fill="none"/><path d="M491.40 238.20v5" stroke="#dde2e8" stroke-width="1" fill="none"/><path d="M579.88 238.20v5" stroke="#dde2e8" stroke-width="1" fill="none"/><path d="M668.36 238.20v5" stroke="#dde2e8" stroke-width="1" fill="none"/><path d="M49.00 168.66H50.84V169.49H52.69V173.11H54.53V186.46H56.37V184.51H58.22V160.04H60.06V188.96H61.90V182.84H63.75V175.33H65.59V134.72H67.43V155.31H69.28V163.65H71.12V124.43H72.96V155.03H74.81V108.57H76.65V96.33H78.49V88.27H80.34V123.04H82.18V122.76H84.02V124.99H85.87V120.54H87.71V112.19H89.55V117.20H91.40V121.65H93.24V113.30H95.08V136.39H96.93V94.11H98.77V116.64H100.61V156.14H102.46V79.09H104.30V75.75H106.14V113.30H107.99V71.58H109.83V135.56H111.67V144.46H113.52V151.97H115.36V144.18H117.20V152.80H119.05V161.15H120.89V156.70H122.73V155.03H124.58V148.35H126.42V161.15H128.26V136.67H130.11V142.79H131.95V129.71H133.79V151.13H135.64V159.48H137.48V186.18H139.32V178.95H141.17V190.63H143.01V187.30H144.85V147.80H146.70V151.97H148.54V155.03H150.38V187.85H152.23V187.30H154.07V126.38H155.91V142.51H157.76V174.50H159.60V144.18H161.44V134.17H163.29V136.95H165.13V118.03H166.97V110.24H168.82V97.45H170.66V137.50H172.50V123.04H174.35V128.05H176.19V122.48H178.03V123.87H179.88V107.46H181.72V128.32H183.56V123.32H185.41V151.13H187.25V114.42H189.09V139.17H190.94V129.16H192.78V95.50H194.62V114.14H196.47V119.98H198.31V122.76H200.15V124.43H202.00V151.69H203.84V144.46H205.68V156.98H207.53V155.31H209.37V163.37H211.21V134.17H213.06V113.86H214.90V132.50H216.74V134.72H218.59V150.30H220.43V179.51H222.27V159.48H224.12V161.70H225.96V169.77H227.80V189.80H229.65V160.87H231.49V188.13H233.33V170.61H235.18V192.30H237.02V173.94H238.86V172.83H240.71V195.92H242.55V193.69H244.39V145.01H246.24V141.12H248.08V141.12H249.92V151.69H251.77V133.33H253.61V118.31H255.45V131.38H257.30V129.16H259.14V115.53H260.98V144.18H262.83V110.24H264.67V131.66H266.51V125.82H268.36V102.45H270.20V137.78H272.04V140.29H273.89V131.38H275.73V125.82H277.57V132.50H279.42V108.30H281.26V127.49H283.10V132.50H284.95V145.85H286.79V161.15H288.63V160.87H290.48V144.18H292.32V135.56H294.16V165.04H296.01V160.31H297.85V127.21H299.69V132.50H301.54V139.17H303.38V159.48H305.22V136.39H307.07V119.14H308.91V161.98H310.75V158.64H312.60V177.28H314.44V188.69H316.28V159.20H318.13V179.78H319.97V177.84H321.81V183.68H323.66V182.01H325.50V170.33H327.34V188.96H329.19V181.45H331.03V149.46H332.87V191.19H334.72V131.66H336.56V195.64H338.40V161.98H340.25V163.37H342.09V150.30H343.93V75.47H345.78V92.44H347.62V132.50H349.46V135.00H351.31V164.49H353.15V180.34H354.99V146.13H356.84V166.15H358.68V136.67H360.52V135.83H362.37V170.61H364.21V158.64H366.05V159.48H367.90V187.02H369.74V161.15H371.58V160.31H373.43V162.54H375.27V164.21H377.11V178.67H378.96V176.17H380.80V155.86H382.64V184.79H384.49V149.46H386.33V155.03H388.17V166.99H390.02V140.01H391.86V141.95H393.70V160.31H395.55V171.44H397.39V180.62H399.23V161.15H401.08V183.12H402.92V188.96H404.77V188.96H406.61V165.32H408.45V177.28H410.30V181.18H412.14V188.13H413.98V156.98H415.83V178.67H417.67V148.63H419.51V173.94H421.36V146.96H423.20V178.12H425.04V199.81H426.89V198.70H428.73V167.55H430.57V165.04H432.42V165.88H434.26V183.68H436.10V151.97H437.95V164.21H439.79V155.03H441.63V181.18H443.48V160.31H445.32V169.77H447.16V126.38H449.01V195.36H450.85V195.64H452.69V159.48H454.54V115.25H456.38V182.84H458.22V148.35H460.07V126.66H461.91V144.46H463.75V136.11H465.60V136.67H467.44V127.49H469.28V154.19H471.13V156.14H472.97V164.21H474.81V187.02H476.66V140.29H478.50V197.31H480.34V138.89H482.19V169.77H484.03V167.55H485.87V174.50H487.72V160.31H489.56V194.81H491.40V183.68H493.25V177.84H495.09V179.51H496.93V178.12H498.78V174.50H500.62V181.18H502.46V175.33H504.31V178.95H506.15V133.05H507.99V183.12H509.84V170.33H511.68V156.14H513.52V147.52H515.37V161.98H517.21V115.53H519.05V129.99H520.90V104.96H522.74V88.82H524.58V109.13H526.43V93.28H528.27V123.04H530.11V98.28H531.96V96.61H533.80V88.82H535.64V128.88H537.49V98.84H539.33V114.97H541.17V80.48H543.02V88.27H544.86V112.19H546.70V96.61H548.55V74.36H550.39V117.48H552.23V135.00H554.08V144.18H555.92V128.32H557.76V137.50H559.61V161.98H561.45V155.31H563.29V155.31H565.14V163.37H566.98V125.54H568.82V126.66H570.67V118.59H572.51V121.09H574.35V156.14H576.20V150.02H578.04V151.69H579.88V173.11H581.73V143.35H583.57V182.29H585.41V165.32H587.26V188.13H589.10V193.14H590.94V144.46H592.79V178.12H594.63V131.11H596.47V180.34H598.32V140.56H600.16V144.46H602.00V131.38H603.85V141.12H605.69V127.49H607.53V117.48H609.38V103.29H611.22V117.20H613.06V134.17H614.91V135.28H616.75V127.49H618.59V127.77H620.44V118.31H622.28V119.14H624.12V124.43H625.97V111.91H627.81V137.78H629.65V140.29H631.50V139.73H633.34V140.01H635.18V127.49H637.03V115.25H638.87V148.35H640.71V135.00H642.56V132.50H644.40V147.80H646.24V114.97H648.09V142.79H649.93V137.50H651.77V165.32H653.62V133.33H655.46V146.96H657.30V178.95H659.15V142.79H660.99V166.15H662.83V158.64H664.68V160.04H666.52V148.35H668.36V174.78H670.21V173.11H672.05V176.17H673.89V159.48H675.74V174.78H677.58V139.45H679.42V139.45H681.27V178.95H683.11V165.32H684.95V141.95H686.80V138.89H688.64V157.81H690.48V139.45H692.33V161.98H694.17V140.84H696.01V157.53H697.86V141.95H699.70V119.14H701.54V120.54H703.39V132.50H705.23V137.50H707.07V120.81H708.92V110.80H710.76V108.30H712.60V132.22H714.45V123.32H716.29V122.48H718.13V128.32H719.98V128.05H721.82V116.64H723.66V125.82H725.51V131.11H727.35V121.09H729.19V142.79H731.04V111.63H732.88V127.49H734.72V108.30H736.57V159.20H738.41V144.46H740.25V165.32H742.10V161.98H743.94V138.34H745.78V131.66H747.63V133.33H749.47V162.82H751.31V141.95H753.16V153.36H755.00V184.51V238.20H49.00Z" fill="url(#g6)" stroke="none"/><path d="M49.00 168.66H50.84V169.49H52.69V173.11H54.53V186.46H56.37V184.51H58.22V160.04H60.06V188.96H61.90V182.84H63.75V175.33H65.59V134.72H67.43V155.31H69.28V163.65H71.12V124.43H72.96V155.03H74.81V108.57H76.65V96.33H78.49V88.27H80.34V123.04H82.18V122.76H84.02V124.99H85.87V120.54H87.71V112.19H89.55V117.20H91.40V121.65H93.24V113.30H95.08V136.39H96.93V94.11H98.77V116.64H100.61V156.14H102.46V79.09H104.30V75.75H106.14V113.30H107.99V71.58H109.83V135.56H111.67V144.46H113.52V151.97H115.36V144.18H117.20V152.80H119.05V161.15H120.89V156.70H122.73V155.03H124.58V148.35H126.42V161.15H128.26V136.67H130.11V142.79H131.95V129.71H133.79V151.13H135.64V159.48H137.48V186.18H139.32V178.95H141.17V190.63H143.01V187.30H144.85V147.80H146.70V151.97H148.54V155.03H150.38V187.85H152.23V187.30H154.07V126.38H155.91V142.51H157.76V174.50H159.60V144.18H161.44V134.17H163.29V136.95H165.13V118.03H166.97V110.24H168.82V97.45H170.66V137.50H172.50V123.04H174.35V128.05H176.19V122.48H178.03V123.87H179.88V107.46H181.72V128.32H183.56V123.32H185.41V151.13H187.25V114.42H189.09V139.17H190.94V129.16H192.78V95.50H194.62V114.14H196.47V119.98H198.31V122.76H200.15V124.43H202.00V151.69H203.84V144.46H205.68V156.98H207.53V155.31H209.37V163.37H211.21V134.17H213.06V113.86H214.90V132.50H216.74V134.72H218.59V150.30H220.43V179.51H222.27V159.48H224.12V161.70H225.96V169.77H227.80V189.80H229.65V160.87H231.49V188.13H233.33V170.61H235.18V192.30H237.02V173.94H238.86V172.83H240.71V195.92H242.55V193.69H244.39V145.01H246.24V141.12H248.08V141.12H249.92V151.69H251.77V133.33H253.61V118.31H255.45V131.38H257.30V129.16H259.14V115.53H260.98V144.18H262.83V110.24H264.67V131.66H266.51V125.82H268.36V102.45H270.20V137.78H272.04V140.29H273.89V131.38H275.73V125.82H277.57V132.50H279.42V108.30H281.26V127.49H283.10V132.50H284.95V145.85H286.79V161.15H288.63V160.87H290.48V144.18H292.32V135.56H294.16V165.04H296.01V160.31H297.85V127.21H299.69V132.50H301.54V139.17H303.38V159.48H305.22V136.39H307.07V119.14H308.91V161.98H310.75V158.64H312.60V177.28H314.44V188.69H316.28V159.20H318.13V179.78H319.97V177.84H321.81V183.68H323.66V182.01H325.50V170.33H327.34V188.96H329.19V181.45H331.03V149.46H332.87V191.19H334.72V131.66H336.56V195.64H338.40V161.98H340.25V163.37H342.09V150.30H343.93V75.47H345.78V92.44H347.62V132.50H349.46V135.00H351.31V164.49H353.15V180.34H354.99V146.13H356.84V166.15H358.68V136.67H360.52V135.83H362.37V170.61H364.21V158.64H366.05V159.48H367.90V187.02H369.74V161.15H371.58V160.31H373.43V162.54H375.27V164.21H377.11V178.67H378.96V176.17H380.80V155.86H382.64V184.79H384.49V149.46H386.33V155.03H388.17V166.99H390.02V140.01H391.86V141.95H393.70V160.31H395.55V171.44H397.39V180.62H399.23V161.15H401.08V183.12H402.92V188.96H404.77V188.96H406.61V165.32H408.45V177.28H410.30V181.18H412.14V188.13H413.98V156.98H415.83V178.67H417.67V148.63H419.51V173.94H421.36V146.96H423.20V178.12H425.04V199.81H426.89V198.70H428.73V167.55H430.57V165.04H432.42V165.88H434.26V183.68H436.10V151.97H437.95V164.21H439.79V155.03H441.63V181.18H443.48V160.31H445.32V169.77H447.16V126.38H449.01V195.36H450.85V195.64H452.69V159.48H454.54V115.25H456.38V182.84H458.22V148.35H460.07V126.66H461.91V144.46H463.75V136.11H465.60V136.67H467.44V127.49H469.28V154.19H471.13V156.14H472.97V164.21H474.81V187.02H476.66V140.29H478.50V197.31H480.34V138.89H482.19V169.77H484.03V167.55H485.87V174.50H487.72V160.31H489.56V194.81H491.40V183.68H493.25V177.84H495.09V179.51H496.93V178.12H498.78V174.50H500.62V181.18H502.46V175.33H504.31V178.95H506.15V133.05H507.99V183.12H509.84V170.33H511.68V156.14H513.52V147.52H515.37V161.98H517.21V115.53H519.05V129.99H520.90V104.96H522.74V88.82H524.58V109.13H526.43V93.28H528.27V123.04H530.11V98.28H531.96V96.61H533.80V88.82H535.64V128.88H537.49V98.84H539.33V114.97H541.17V80.48H543.02V88.27H544.86V112.19H546.70V96.61H548.55V74.36H550.39V117.48H552.23V135.00H554.08V144.18H555.92V128.32H557.76V137.50H559.61V161.98H561.45V155.31H563.29V155.31H565.14V163.37H566.98V125.54H568.82V126.66H570.67V118.59H572.51V121.09H574.35V156.14H576.20V150.02H578.04V151.69H579.88V173.11H581.73V143.35H583.57V182.29H585.41V165.32H587.26V188.13H589.10V193.14H590.94V144.46H592.79V178.12H594.63V131.11H596.47V180.34H598.32V140.56H600.16V144.46H602.00V131.38H603.85V141.12H605.69V127.49H607.53V117.48H609.38V103.29H611.22V117.20H613.06V134.17H614.91V135.28H616.75V127.49H618.59V127.77H620.44V118.31H622.28V119.14H624.12V124.43H625.97V111.91H627.81V137.78H629.65V140.29H631.50V139.73H633.34V140.01H635.18V127.49H637.03V115.25H638.87V148.35H640.71V135.00H642.56V132.50H644.40V147.80H646.24V114.97H648.09V142.79H649.93V137.50H651.77V165.32H653.62V133.33H655.46V146.96H657.30V178.95H659.15V142.79H660.99V166.15H662.83V158.64H664.68V160.04H666.52V148.35H668.36V174.78H670.21V173.11H672.05V176.17H673.89V159.48H675.74V174.78H677.58V139.45H679.42V139.45H681.27V178.95H683.11V165.32H684.95V141.95H686.80V138.89H688.64V157.81H690.48V139.45H692.33V161.98H694.17V140.84H696.01V157.53H697.86V141.95H699.70V119.14H701.54V120.54H703.39V132.50H705.23V137.50H707.07V120.81H708.92V110.80H710.76V108.30H712.60V132.22H714.45V123.32H716.29V122.48H718.13V128.32H719.98V128.05H721.82V116.64H723.66V125.82H725.51V131.11H727.35V121.09H729.19V142.79H731.04V111.63H732.88V127.49H734.72V108.30H736.57V159.20H738.41V144.46H740.25V165.32H742.10V161.98H743.94V138.34H745.78V131.66H747.63V133.33H749.47V162.82H751.31V141.95H753.16V153.36H755.00V184.51" fill="none" stroke="#3585f5" stroke-width="1" stroke-opacity="0.78" stroke-linejoin="miter"/><circle cx="338.0" cy="266.5" r="4.300" fill="#3585f5"/></svg>
<span style="position:absolute;left:1098.30px;transform:translateX(-100%);top:768px;font-size:8.3px;line-height:10px;height:10px;color:#7a7d80;font-weight:400;white-space:nowrap;letter-spacing:-0.052px;margin-right:0.052px;">82.8</span>
<span style="position:absolute;left:1098.30px;transform:translateX(-100%);top:795px;font-size:8.3px;line-height:10px;height:10px;color:#7a7d80;font-weight:400;white-space:nowrap;letter-spacing:-0.052px;margin-right:0.052px;">72.3</span>
<span style="position:absolute;left:1098.30px;transform:translateX(-100%);top:823px;font-size:8.3px;line-height:10px;height:10px;color:#7a7d80;font-weight:400;white-space:nowrap;letter-spacing:-0.052px;margin-right:0.052px;">61.9</span>
<span style="position:absolute;left:1098.30px;transform:translateX(-100%);top:851px;font-size:8.3px;line-height:10px;height:10px;color:#7a7d80;font-weight:400;white-space:nowrap;letter-spacing:-0.052px;margin-right:0.052px;">51.4</span>
<span style="position:absolute;left:1098.30px;transform:translateX(-100%);top:879px;font-size:8.3px;line-height:10px;height:10px;color:#7a7d80;font-weight:400;white-space:nowrap;letter-spacing:-0.052px;margin-right:0.052px;">40.9</span>
<span style="position:absolute;left:1098.30px;transform:translateX(-100%);top:906px;font-size:8.3px;line-height:10px;height:10px;color:#7a7d80;font-weight:400;white-space:nowrap;letter-spacing:-0.052px;margin-right:0.052px;">30.5</span>
<span style="position:absolute;left:1098.30px;transform:translateX(-100%);top:934px;font-size:8.3px;line-height:10px;height:10px;color:#7a7d80;font-weight:400;white-space:nowrap;letter-spacing:-0.052px;margin-right:0.052px;">20.0</span>
<span style="position:absolute;left:1106.30px;transform:translateX(-50%);top:952px;font-size:9px;line-height:10px;height:10px;color:#363b3e;font-weight:400;white-space:nowrap;letter-spacing:0.017px;margin-right:-0.017px;">02-07</span>
<span style="position:absolute;left:1194.78px;transform:translateX(-50%);top:952px;font-size:9px;line-height:10px;height:10px;color:#363b3e;font-weight:400;white-space:nowrap;letter-spacing:0.017px;margin-right:-0.017px;">02-08</span>
<span style="position:absolute;left:1283.26px;transform:translateX(-50%);top:952px;font-size:9px;line-height:10px;height:10px;color:#363b3e;font-weight:400;white-space:nowrap;letter-spacing:0.017px;margin-right:-0.017px;">02-09</span>
<span style="position:absolute;left:1371.74px;transform:translateX(-50%);top:952px;font-size:9px;line-height:10px;height:10px;color:#363b3e;font-weight:400;white-space:nowrap;letter-spacing:0.017px;margin-right:-0.017px;">02-10</span>
<span style="position:absolute;left:1460.22px;transform:translateX(-50%);top:952px;font-size:9px;line-height:10px;height:10px;color:#363b3e;font-weight:400;white-space:nowrap;letter-spacing:0.185px;margin-right:-0.185px;">02-11</span>
<span style="position:absolute;left:1548.70px;transform:translateX(-50%);top:952px;font-size:9px;line-height:10px;height:10px;color:#363b3e;font-weight:400;white-space:nowrap;letter-spacing:0.017px;margin-right:-0.017px;">02-12</span>
<span style="position:absolute;left:1637.18px;transform:translateX(-50%);top:952px;font-size:9px;line-height:10px;height:10px;color:#363b3e;font-weight:400;white-space:nowrap;letter-spacing:0.017px;margin-right:-0.017px;">02-13</span>
<span style="position:absolute;left:1725.66px;transform:translateX(-50%);top:952px;font-size:9px;line-height:10px;height:10px;color:#363b3e;font-weight:400;white-space:nowrap;letter-spacing:0.017px;margin-right:-0.017px;">02-14</span>
<span style="position:absolute;left:1402.70px;top:965px;font-size:9px;line-height:10px;height:10px;color:#2e3133;font-weight:400;white-space:nowrap;letter-spacing:0.093px;margin-right:-0.093px;">DEMO Noise /// LAFT5</span>
</article>
</main>
</body></html>
